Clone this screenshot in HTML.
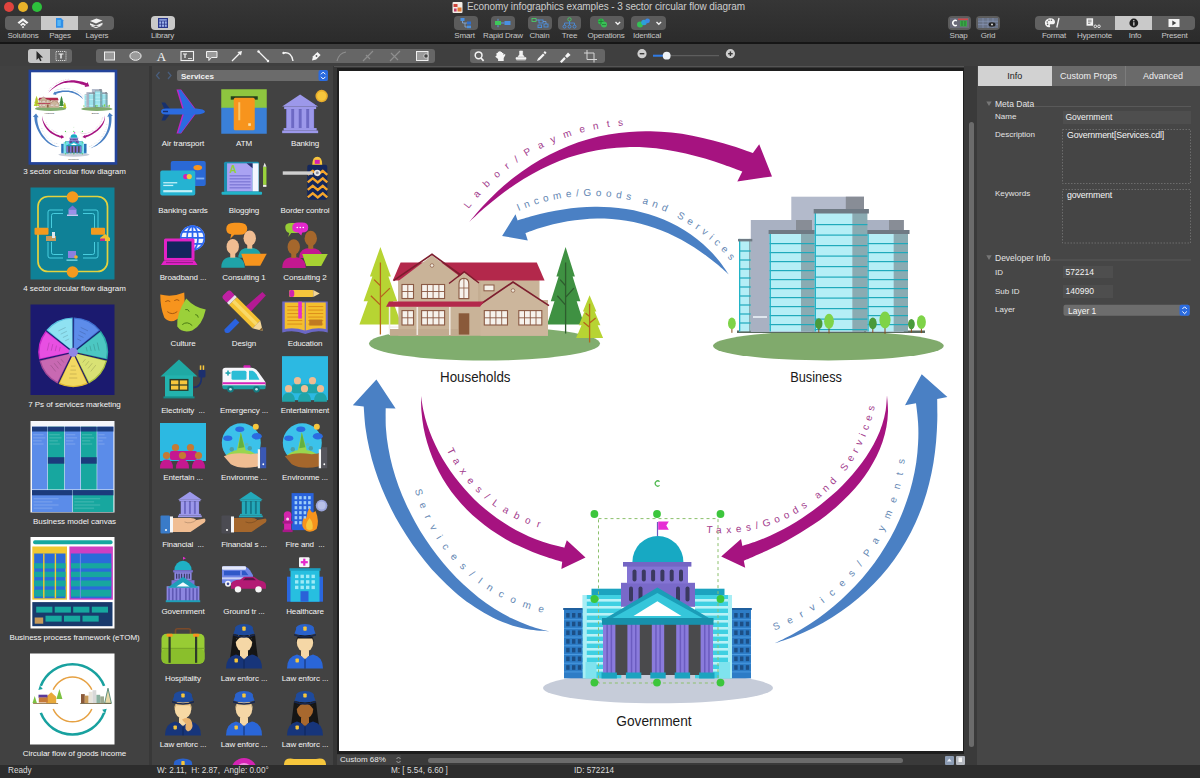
<!DOCTYPE html>
<html><head><meta charset="utf-8">
<style>
*{box-sizing:border-box;margin:0;padding:0}
html,body{width:1200px;height:778px;overflow:hidden;background:#3d3d3d;font-family:"Liberation Sans",sans-serif;}
.abs{position:absolute}
#tb1{position:absolute;left:0;top:0;width:1200px;height:43px;background:linear-gradient(#363636,#2b2b2b);}
#tb1line{position:absolute;left:0;top:42px;width:1200px;height:2px;background:#161616}
#tb2{position:absolute;left:0;top:44px;width:1200px;height:22px;background:#3f3f3f}
.tl{position:absolute;top:2px;width:10px;height:10px;border-radius:50%}
.seg{position:absolute;top:16px;height:14px;background:#616161;border-radius:4px;overflow:hidden}
.seg .sel{position:absolute;top:0;height:14px;background:#c9c9c9}
.btn{position:absolute;top:16px;height:14px;background:#5c5c5c;border-radius:4px}
.lbl{position:absolute;top:31px;font-size:8px;color:#c6c6c6;white-space:nowrap;transform:translateX(-50%);letter-spacing:-0.2px}
.seg2{position:absolute;top:49px;height:14px;background:#5e5e5e;border-radius:3px}
#pages{position:absolute;left:0;top:66px;width:149px;height:699px;background:#414141}
#pdiv{position:absolute;left:149px;top:66px;width:3px;height:699px;background:#383838}
#lib{position:absolute;left:152px;top:66px;width:181px;height:699px;background:#424242;overflow:hidden}
#canvasbg{position:absolute;left:333px;top:66px;width:644px;height:699px;background:#363636}
#page{position:absolute;left:339px;top:71px;width:624px;height:680px;background:#fff;overflow:hidden}
#right{position:absolute;left:977px;top:66px;width:223px;height:699px;background:#464646}
#status{position:absolute;left:0;top:765px;width:1200px;height:13px;background:#2d2d2d;color:#dcdcdc;font-size:8.2px}
#status span{position:absolute;top:1px;white-space:nowrap}
.plabel{position:absolute;left:0;width:149px;text-align:center;font-size:8px;color:#f4f4f4;white-space:nowrap;letter-spacing:-0.05px}
.thumb{position:absolute;left:30px;width:86px;height:93px;overflow:hidden}
.ilabel{position:absolute;font-size:8px;color:#f4f4f4;white-space:nowrap;transform:translateX(-50%);letter-spacing:-0.1px}
.tab{position:absolute;top:0;height:20px;font-size:9px;text-align:center;line-height:20px;color:#eee}
.rl{position:absolute;font-size:8px;color:#e4e4e4;white-space:nowrap}
.fld{position:absolute;background:#4e4e4e;color:#f2f2f2;font-size:8.5px;padding-left:3px;white-space:nowrap}
</style></head><body>
<!-- TOOLBAR1 -->
<div id="tb1">
<div class="tl" style="left:4px;background:#e0443e"></div>
<div class="tl" style="left:18px;background:#e9b32a"></div>
<div class="tl" style="left:32px;background:#2dc13c"></div>
<div class="seg" style="left:5px;width:109px"><div class="sel" style="left:36px;width:37px"></div>
<svg class="abs" style="left:0;top:0" width="109" height="14" viewBox="0 0 109 14">
<path d="M18 2.2 L23.5 6.6 L21.8 8 L18 5 L14.2 8 L12.5 6.6Z M18 6.4 L21 8.8 L19.6 10 L18 8.7 L16.4 10 L15 8.8Z M18 10 l1.3 1.1 l-1.3 1.1 l-1.3 -1.1Z" fill="#f4f4f4"/>
<path d="M51 2 h5 l2.2 2.2 v7.6 h-7.2Z" fill="#2f8fe8"/><path d="M52.3 4 h3.5 v6 h-3.5z" fill="#57b6f5"/>
<path d="M85 5 l6.5 -2.6 l6 2.2 l-6.5 2.8z M85 7.2 l6 2.4 l6.5 -2.8 v1.6 l-6.5 2.9 l-6 -2.5z M85 9.8 l6 2.5 l6.5 -2.9" fill="#f2f2f2"/>
</svg></div>
<div class="lbl" style="left:23px">Solutions</div><div class="lbl" style="left:60px">Pages</div><div class="lbl" style="left:97px">Layers</div>
<div class="btn" style="left:151px;width:24px;background:#c9c9c9"><svg class="abs" style="left:7px;top:2px" width="10" height="10" viewBox="0 0 10 10"><rect x="0.6" y="0.6" width="8.8" height="8.8" fill="#9bb0e8" stroke="#27358a" stroke-width="1.2"/><path d="M0.6 3 h8.8 M3.5 3 v6.4 M6.5 3 v6.4 M0.6 6.2 h8.8" stroke="#27358a" stroke-width="0.8"/></svg></div>
<div class="lbl" style="left:162.5px">Library</div>
<svg class="abs" style="left:452px;top:2px" width="11" height="11" viewBox="0 0 11 11"><rect x="0.5" y="0" width="10" height="11" rx="1" fill="#f3ede6"/><rect x="1.5" y="2" width="4" height="3" fill="#d0453a"/><rect x="5.5" y="5.5" width="4" height="4" fill="#e2772e"/><rect x="2" y="6.5" width="2.6" height="3" fill="#c23b6a"/></svg>
<div class="abs" style="left:467px;top:0px;font-size:10px;line-height:13px;color:#cdcdcd;white-space:nowrap;letter-spacing:-0.08px">Economy infographics examples - 3 sector circular flow diagram</div>
<div class="btn" style="left:454px;width:24px"><svg class="abs" style="left:5px;top:1px" width="14" height="12" viewBox="0 0 14 12"><rect x="1.5" y="1" width="4" height="3" fill="#4a90e2"/><rect x="8" y="4.5" width="4" height="3" fill="#2f6fd0"/><rect x="8" y="8.6" width="4" height="2.6" fill="#4a90e2"/><path d="M3.5 4 v2 h4.5 M6 6 v4 h2" stroke="#8ab8f0" stroke-width="0.7" fill="none"/></svg></div>
<div class="btn" style="left:491px;width:24px"><svg class="abs" style="left:3px;top:2px" width="18" height="10" viewBox="0 0 18 10"><rect x="1" y="3" width="6" height="4" fill="#3ec85a"/><rect x="10.5" y="3" width="6" height="4" fill="#4a90e2"/><path d="M7 5 h3.5 M4 0.8 v2 M4 7.2 v2" stroke="#5aa0f0" stroke-width="0.9"/></svg></div>
<div class="btn" style="left:528px;width:24px"><svg class="abs" style="left:3px;top:1px" width="18" height="12" viewBox="0 0 18 12"><rect x="1" y="1.5" width="4" height="3" fill="none" stroke="#4ac868" stroke-width="0.9"/><rect x="8" y="3" width="4" height="3" fill="none" stroke="#4a90e2" stroke-width="0.9"/><rect x="13" y="7" width="4" height="3" fill="none" stroke="#4a90e2" stroke-width="0.9"/><rect x="7" y="8" width="3.6" height="2.6" fill="none" stroke="#4a90e2" stroke-width="0.9"/><path d="M5 3 h3 M12 4.5 h3 v2.5" stroke="#6aa8f0" stroke-width="0.7" fill="none"/></svg></div>
<div class="btn" style="left:558px;width:23px"><svg class="abs" style="left:4px;top:1px" width="15" height="12" viewBox="0 0 15 12"><circle cx="7.5" cy="2.4" r="1.7" fill="none" stroke="#4ac868" stroke-width="0.9"/><path d="M7.5 4 v2 M2.5 8 v-2 h10 v2 M7.5 6 v2" stroke="#4a90e2" stroke-width="0.8" fill="none"/><circle cx="2.5" cy="9.6" r="1.5" fill="none" stroke="#4a90e2" stroke-width="0.9"/><circle cx="7.5" cy="9.6" r="1.5" fill="none" stroke="#4a90e2" stroke-width="0.9"/><circle cx="12.5" cy="9.6" r="1.5" fill="none" stroke="#4a90e2" stroke-width="0.9"/></svg></div>
<div class="btn" style="left:589.5px;width:34.5px"><svg class="abs" style="left:6px;top:1px" width="26" height="12" viewBox="0 0 26 12"><circle cx="5" cy="4.5" r="3" fill="#2fb84a"/><circle cx="8" cy="7.5" r="3" fill="#39c657" opacity="0.9"/><path d="M2.5 4.5 h5 M5 2 v5 M6 7.5 h4" stroke="#1a7a30" stroke-width="0.7"/><path d="M19.5 5 l2.3 2.3 l2.3 -2.3" stroke="#f0f0f0" stroke-width="1.4" fill="none"/></svg></div>
<div class="btn" style="left:631px;width:34.5px"><svg class="abs" style="left:4px;top:1px" width="28" height="12" viewBox="0 0 28 12"><circle cx="5" cy="7.5" r="3" fill="#35c055"/><circle cx="9" cy="5.5" r="2.8" fill="#2ea0d8"/><circle cx="12.5" cy="3.8" r="2.4" fill="#3a8ae8"/><path d="M21.5 5 l2.3 2.3 l2.3 -2.3" stroke="#f0f0f0" stroke-width="1.4" fill="none"/></svg></div>
<div class="lbl" style="left:464.5px">Smart</div><div class="lbl" style="left:503px">Rapid Draw</div><div class="lbl" style="left:539.5px">Chain</div><div class="lbl" style="left:569.5px">Tree</div><div class="lbl" style="left:606px">Operations</div><div class="lbl" style="left:647px">Identical</div>
<div class="btn" style="left:947.5px;width:23px"><svg class="abs" style="left:2px;top:2px" width="19" height="10" viewBox="0 0 19 10"><rect x="0" y="0" width="19" height="10" fill="#6a6a78"/><path d="M6.8 2.8 A2.6 2.6 0 1 0 6.8 7.2" stroke="#fff" stroke-width="1.5" fill="none"/><rect x="10" y="2.5" width="7" height="6" fill="#3aa848"/><rect x="8" y="0.5" width="10" height="1.6" fill="#d04848"/><path d="M12 3 v5 M15 3 v5" stroke="#1f6a2a" stroke-width="0.7"/></svg></div>
<div class="btn" style="left:976px;width:24px"><svg class="abs" style="left:2px;top:2px" width="20" height="10" viewBox="0 0 20 10"><rect width="20" height="10" fill="#6a7488"/><path d="M0 3.3 h20 M0 6.6 h20 M5 0 v10 M10 0 v10 M15 0 v10" stroke="#8a98b8" stroke-width="0.6"/><ellipse cx="14" cy="6.5" rx="3.5" ry="2.2" fill="#222"/><circle cx="14" cy="6.5" r="1" fill="#ddd"/></svg></div>
<div class="lbl" style="left:958.5px">Snap</div><div class="lbl" style="left:988px">Grid</div>
<div class="seg" style="left:1034.5px;width:160.5px"><div class="sel" style="left:80px;width:37.5px"></div>
<svg class="abs" style="left:0;top:0" width="161" height="14" viewBox="0 0 161 14">
<path d="M15.5 2.2 c-3.6 0 -5.6 2.4 -5.6 4.8 c0 2.4 1.8 4.3 4.2 4.3 c1.2 0 1.2 -1 .8 -1.6 c-.4 -.7 0 -1.4 .9 -1.4 h1.6 c1.6 0 2.6 -1 2.6 -2.4 c0 -2.2 -2 -3.7 -4.5 -3.7z" fill="#f4f4f4"/><circle cx="12.3" cy="6" r="0.8" fill="#616161"/><circle cx="14" cy="4.2" r="0.8" fill="#616161"/><circle cx="16.4" cy="4.3" r="0.8" fill="#616161"/><circle cx="12.6" cy="8.4" r="0.8" fill="#616161"/><path d="M24 2 l-2.2 9.5" stroke="#f4f4f4" stroke-width="1.3"/>
<rect x="51.5" y="2.3" width="6.6" height="7.4" fill="#f4f4f4"/><path d="M53 4.2 h3.6 M53 5.8 h3.6 M53 7.4 h2.4" stroke="#616161" stroke-width="0.7"/><circle cx="60.3" cy="10.3" r="1.3" fill="none" stroke="#f4f4f4" stroke-width="0.9"/><circle cx="64" cy="10.3" r="1.3" fill="none" stroke="#f4f4f4" stroke-width="0.9"/>
<circle cx="98.8" cy="7" r="4.4" fill="#1e1e1e"/><rect x="98.2" y="6.2" width="1.3" height="3.4" fill="#d0d0d0"/><circle cx="98.8" cy="4.7" r="0.8" fill="#d0d0d0"/>
<rect x="133.5" y="3" width="11" height="8" fill="#f4f4f4"/><path d="M137.3 4.6 v4.8 l4 -2.4z" fill="#444"/>
</svg></div>
<div class="lbl" style="left:1054px">Format</div><div class="lbl" style="left:1094.5px">Hypernote</div><div class="lbl" style="left:1135px">Info</div><div class="lbl" style="left:1174.5px">Present</div>

</div>
<div id="tb1line"></div>
<div id="tb2">
<div class="abs" style="left:28px;top:4.7px;width:44px;height:14px;background:#666666;border-radius:3px;overflow:hidden"><div class="abs" style="left:0;top:0;width:22px;height:14px;background:#c6c6c6"></div>
<svg class="abs" style="left:0;top:0" width="44" height="14" viewBox="0 0 44 14"><path d="M8.5 2 v9 l2.2 -2 l1.5 3.2 l1.4 -.7 l-1.5 -3 h3z" fill="#2a2a2a"/><rect x="28" y="2.5" width="10" height="9" fill="none" stroke="#eee" stroke-width="0.8" stroke-dasharray="1.2 0.8"/><path d="M30.6 4.4 h4.8 v1.2 h-1.7 v4 h-1.4 v-4 h-1.7z" fill="#f4f4f4"/></svg></div>
<div class="abs" style="left:96px;top:4.7px;width:338.5px;height:14px;background:#666666;border-radius:3px;overflow:hidden">
<svg class="abs" style="left:0;top:0" width="339" height="14" viewBox="96 49 339 14">
<rect x="104.5" y="52" width="10" height="8" fill="#9a9a9a" stroke="#f0f0f0" stroke-width="1"/>
<ellipse cx="135.5" cy="56" rx="5.6" ry="4.3" fill="#9a9a9a" stroke="#f0f0f0" stroke-width="1"/>
<text x="161.5" y="61" font-family="Liberation Serif, serif" font-size="13" fill="#f4f4f4" text-anchor="middle">A</text>
<rect x="181" y="51.5" width="12.5" height="9" fill="none" stroke="#f0f0f0" stroke-width="1.1"/><path d="M183 53.5 h4 v1 h-1.4 v3.5 h-1.2 v-3.5 h-1.4z" fill="#f4f4f4"/><path d="M188 58.5 h4" stroke="#f0f0f0" stroke-width="0.8"/>
<path d="M206.5 51.5 h10.5 v6 h-5.5 l-2.6 3 v-3 h-2.4z" fill="#9a9a9a" stroke="#f0f0f0" stroke-width="1"/>
<path d="M232 61 l8 -8" stroke="#f4f4f4" stroke-width="1.3"/><path d="M242 51 l-1 4.6 l-3.6 -3.6z" fill="#f4f4f4"/>
<path d="M258.5 51.5 l9.5 9.5" stroke="#f4f4f4" stroke-width="1.3"/><circle cx="258.5" cy="51.5" r="1.2" fill="#f4f4f4"/><circle cx="268" cy="61" r="1.2" fill="#f4f4f4"/>
<path d="M283.5 53 q8 -1.5 9.5 8" stroke="#f4f4f4" stroke-width="1.4" fill="none"/><circle cx="283.5" cy="53" r="1.2" fill="#f4f4f4"/>
<path d="M312 60.5 l1 -4.2 l4.4 -4.4 l3.2 3.2 l-4.4 4.4z" fill="#f4f4f4"/><circle cx="316.5" cy="56" r="0.9" fill="#5e5e5e"/>
<g fill="none" stroke="#8e8e8e" stroke-width="1.2"><path d="M337 61 q2 -8 9 -9"/><path d="M363 61 l10 -10 M366 55 l4 4"/><path d="M390 61 l10 -10 M391 53 l7 7"/></g>
<rect x="416.5" y="51.5" width="11.5" height="9" fill="#9a9a9a" stroke="#f0f0f0" stroke-width="1"/><circle cx="426" cy="56" r="2.2" fill="#444" stroke="#eee" stroke-width="0.7"/>
</svg></div>
<div class="abs" style="left:470px;top:4.7px;width:135px;height:14px;background:#666666;border-radius:3px;overflow:hidden">
<svg class="abs" style="left:0;top:0" width="135" height="14" viewBox="470 49 135 14">
<circle cx="478.6" cy="55.3" r="3.4" fill="none" stroke="#f4f4f4" stroke-width="1.5"/><path d="M481 58 l2.6 2.8" stroke="#f4f4f4" stroke-width="1.7"/>
<path d="M496.5 56 v-3 h1.3 v-1.2 h1.4 v-.6 h1.5 v.7 h1.4 v1 h1.3 v2 l1.2 -1 l.9 .8 l-1.8 3.2 v3 h-5.6 v-1.8 l-2.8 -2.4 l.8 -.9z" fill="#f4f4f4"/>
<path d="M519.6 51 h3 v3.5 l1.6 2.3 h-6.2 l1.6 -2.3z M516 57.6 h10 v1.6 h-10z M516.5 60 h9" fill="#f4f4f4" stroke="#f4f4f4" stroke-width="0.6"/>
<path d="M537 61 l1 -2.6 l5 -5 l1.7 1.7 l-5 5z M543.5 52.5 l1.4 -1.4 l1.7 1.7 l-1.4 1.4z" fill="#f4f4f4"/>
<path d="M560 61.5 l4.2 -4.4 l1.6 1.6 l-4.2 4.2z M565 56 l3 -3.6 l2.6 2.6 l-3.6 3z" fill="#f4f4f4"/>
<path d="M587 50 v9.500 h10 M584 53 h10 v9.500" stroke="#d4d4d4" stroke-width="1" fill="none"/>
</svg></div>
<svg class="abs" style="left:635px;top:3px" width="105" height="16" viewBox="635 47 105 16">
<circle cx="642" cy="53.700" r="4.6" fill="#cfcfcf"/><rect x="639.7" y="53" width="4.6" height="1.4" fill="#3a3a3a"/>
<path d="M653 55.700 h66" stroke="#5e5e5e" stroke-width="1.2"/><path d="M653 55.700 h13" stroke="#2f7be6" stroke-width="2"/>
<circle cx="666.700" cy="55.700" r="3.9" fill="#eef2f6"/>
<circle cx="730.400" cy="53.700" r="4.6" fill="#cfcfcf"/><rect x="728.1" y="53" width="4.6" height="1.4" fill="#3a3a3a"/><rect x="729.7" y="51.4" width="1.4" height="4.6" fill="#3a3a3a"/>
</svg>

</div>
<!-- PAGES -->
<div id="pages">
<svg class="abs" style="left:0;top:0" width="149" height="699" viewBox="0 66 149 699">
<rect x="29.800" y="71" width="86.200" height="92.400" fill="#fff" stroke="#23439a" stroke-width="2.6"/>
<svg x="31" y="72" width="84" height="91" viewBox="339 69 624 682" preserveAspectRatio="none"><use href="#diagroot"/></svg>
<rect x="30.500" y="187.500" width="84" height="92" fill="#0f8197"/>
<rect x="38" y="196.500" width="69.500" height="75" rx="10" fill="none" stroke="#e4d23e" stroke-width="1.700"/>
<rect x="48" y="210" width="50" height="48" rx="2" fill="none" stroke="#4fd6e6" stroke-width="0.9"/><rect x="51.500" y="213.500" width="43" height="41" rx="2" fill="none" stroke="#4fd6e6" stroke-width="0.9"/>
<rect x="63" y="206" width="20" height="12" fill="#0f8197"/><rect x="63" y="250" width="20" height="14" fill="#0f8197"/><rect x="44" y="228" width="12" height="14" fill="#0f8197"/><rect x="90" y="228" width="10" height="14" fill="#0f8197"/>
<circle cx="72.500" cy="197" r="5.800" fill="#f39a1e"/><circle cx="72.500" cy="272" r="5.800" fill="#f39a1e"/><rect x="34.500" y="227.700" width="14" height="7" rx="1" fill="#f39a1e"/><rect x="91" y="227.700" width="14" height="7" rx="1" fill="#f39a1e"/>
<path d="M72.500 205.500 l4.500 4 h-9z" fill="#7a72d2"/><rect x="68.500" y="209.500" width="8" height="5" fill="#9a90e8"/><rect x="67" y="214.500" width="11" height="1.500" fill="#c9c4f4"/>
<rect x="68" y="251" width="8" height="7" fill="#8a80e0"/><circle cx="76" cy="257" r="1.800" fill="#f0b030"/><rect x="66.500" y="259.500" width="11" height="1.300" fill="#7fdbe8"/>
<rect x="46" y="236" width="10" height="5" fill="#c79a5a"/><rect x="52" y="232" width="3" height="6" fill="#dfe6ee"/><path d="M100 238 l5 -4 l5 4 v3 h-10z" fill="#f0c030"/><rect x="100" y="238.500" width="5" height="2.500" fill="#c0308a"/>
<rect x="30.500" y="304.500" width="84" height="90.500" fill="#1b1a6f"/>
<path d="M73.2 352.3 L73.9 318.1 A34.2 34.2 0 0 1 99.5 330.4Z" fill="#5d8cea" stroke="#3f6fd0" stroke-width="1.4"/>
<path d="M77.2 338.9 L81.2 340.8" stroke="#00000030" stroke-width="0.8"/>
<path d="M78.4 335.1 L83.5 337.5" stroke="#00000030" stroke-width="0.8"/>
<path d="M79.5 331.2 L85.7 334.2" stroke="#00000030" stroke-width="0.8"/>
<path d="M80.7 327.4 L88.0 330.9" stroke="#00000030" stroke-width="0.8"/>
<path d="M73.2 352.3 L100.4 331.5 A34.2 34.2 0 0 1 106.7 359.2Z" fill="#4cc7c2" stroke="#2aa8a8" stroke-width="1.4"/>
<path d="M86.2 347.1 L87.2 351.4" stroke="#00000030" stroke-width="0.8"/>
<path d="M89.9 345.6 L91.2 351.1" stroke="#00000030" stroke-width="0.8"/>
<path d="M93.6 344.1 L95.2 350.8" stroke="#00000030" stroke-width="0.8"/>
<path d="M97.3 342.6 L99.1 350.6" stroke="#00000030" stroke-width="0.8"/>
<path d="M73.2 352.3 L106.4 360.6 A34.2 34.2 0 0 1 88.7 382.8Z" fill="#d9e274" stroke="#a8c040" stroke-width="1.4"/>
<path d="M85.4 359.2 L82.6 362.6" stroke="#00000030" stroke-width="0.8"/>
<path d="M88.9 361.2 L85.3 365.6" stroke="#00000030" stroke-width="0.8"/>
<path d="M92.3 363.2 L88.0 368.5" stroke="#00000030" stroke-width="0.8"/>
<path d="M95.8 365.1 L90.7 371.5" stroke="#00000030" stroke-width="0.8"/>
<path d="M73.2 352.3 L87.4 383.4 A34.2 34.2 0 0 1 59.0 383.4Z" fill="#f2d862" stroke="#e0b830" stroke-width="1.4"/>
<path d="M75.4 366.1 L71.0 366.1" stroke="#00000030" stroke-width="0.8"/>
<path d="M76.0 370.1 L70.4 370.1" stroke="#00000030" stroke-width="0.8"/>
<path d="M76.6 374.0 L69.8 374.0" stroke="#00000030" stroke-width="0.8"/>
<path d="M77.3 378.0 L69.1 378.0" stroke="#00000030" stroke-width="0.8"/>
<path d="M73.2 352.3 L57.7 382.8 A34.2 34.2 0 0 1 40.0 360.6Z" fill="#c869b2" stroke="#a04898" stroke-width="1.4"/>
<path d="M63.8 362.6 L61.0 359.2" stroke="#00000030" stroke-width="0.8"/>
<path d="M61.1 365.6 L57.5 361.2" stroke="#00000030" stroke-width="0.8"/>
<path d="M58.4 368.5 L54.1 363.2" stroke="#00000030" stroke-width="0.8"/>
<path d="M55.7 371.5 L50.6 365.1" stroke="#00000030" stroke-width="0.8"/>
<path d="M73.2 352.3 L39.7 359.2 A34.2 34.2 0 0 1 46.0 331.5Z" fill="#e84fe2" stroke="#c828c8" stroke-width="1.4"/>
<path d="M59.2 351.4 L60.2 347.1" stroke="#00000030" stroke-width="0.8"/>
<path d="M55.2 351.1 L56.5 345.6" stroke="#00000030" stroke-width="0.8"/>
<path d="M51.2 350.8 L52.8 344.1" stroke="#00000030" stroke-width="0.8"/>
<path d="M47.3 350.6 L49.1 342.6" stroke="#00000030" stroke-width="0.8"/>
<path d="M73.2 352.3 L46.9 330.4 A34.2 34.2 0 0 1 72.5 318.1Z" fill="#8fe2f2" stroke="#58c0e0" stroke-width="1.4"/>
<path d="M65.2 340.8 L69.2 338.9" stroke="#00000030" stroke-width="0.8"/>
<path d="M62.9 337.5 L68.0 335.1" stroke="#00000030" stroke-width="0.8"/>
<path d="M60.7 334.2 L66.9 331.2" stroke="#00000030" stroke-width="0.8"/>
<path d="M58.4 330.9 L65.7 327.4" stroke="#00000030" stroke-width="0.8"/>
<path d="M73.2 352.3 L73.2 317.1" stroke="#1b1a6f" stroke-width="1.1"/>
<path d="M73.2 352.3 L100.7 330.4" stroke="#1b1a6f" stroke-width="1.1"/>
<path d="M73.2 352.3 L107.5 360.1" stroke="#1b1a6f" stroke-width="1.1"/>
<path d="M73.2 352.3 L88.5 384.0" stroke="#1b1a6f" stroke-width="1.1"/>
<path d="M73.2 352.3 L57.9 384.0" stroke="#1b1a6f" stroke-width="1.1"/>
<path d="M73.2 352.3 L38.9 360.1" stroke="#1b1a6f" stroke-width="1.1"/>
<path d="M73.2 352.3 L45.7 330.4" stroke="#1b1a6f" stroke-width="1.1"/>
<circle cx="73.2" cy="352.3" r="4.6" fill="#8f86e6"/>
<rect x="30.500" y="421" width="84" height="91.500" fill="#f4f6fb"/>
<rect x="32.0" y="426.7" width="15.4" height="62.8" fill="#5b8ce9"/>
<rect x="32.0" y="426.7" width="15.4" height="4.8" fill="#1b3b7c"/>
<rect x="47.9" y="426.7" width="16.4" height="62.8" fill="#17a79f"/>
<rect x="47.9" y="426.7" width="16.4" height="4.8" fill="#1b3b7c"/>
<rect x="64.8" y="426.7" width="15.7" height="62.8" fill="#5b8ce9"/>
<rect x="64.8" y="426.7" width="15.7" height="4.8" fill="#1b3b7c"/>
<rect x="81.0" y="426.7" width="15.7" height="62.8" fill="#17a79f"/>
<rect x="81.0" y="426.7" width="15.7" height="4.8" fill="#1b3b7c"/>
<rect x="97.2" y="426.7" width="16.2" height="62.8" fill="#5b8ce9"/>
<rect x="97.2" y="426.7" width="16.2" height="4.8" fill="#1b3b7c"/>
<rect x="47.9" y="457.2" width="16.4" height="6.5" fill="#1b3b7c"/>
<rect x="81.0" y="457.2" width="15.7" height="6.5" fill="#1b3b7c"/>
<rect x="32.0" y="490.1" width="40.3" height="21.9" fill="#5b8ce9"/>
<rect x="72.8" y="490.1" width="40.6" height="21.9" fill="#17a79f"/>
<rect x="32.0" y="490.1" width="40.3" height="5.2" fill="#1b3b7c"/>
<rect x="72.8" y="490.1" width="40.6" height="5.2" fill="#1b3b7c"/>
<rect x="33.1" y="434.4" width="10.5" height="0.8" fill="#ffffff40"/>
<rect x="33.1" y="437.5" width="12.3" height="0.8" fill="#ffffff40"/>
<rect x="33.1" y="440.5" width="8.6" height="0.8" fill="#ffffff40"/>
<rect x="33.1" y="443.6" width="10.5" height="0.8" fill="#ffffff40"/>
<rect x="49.3" y="434.4" width="10.5" height="0.8" fill="#ffffff40"/>
<rect x="49.3" y="437.5" width="12.3" height="0.8" fill="#ffffff40"/>
<rect x="49.3" y="440.5" width="8.6" height="0.8" fill="#ffffff40"/>
<rect x="49.3" y="443.6" width="10.5" height="0.8" fill="#ffffff40"/>
<rect x="66.0" y="434.4" width="9.3" height="0.8" fill="#ffffff40"/>
<rect x="66.0" y="437.5" width="11.1" height="0.8" fill="#ffffff40"/>
<rect x="66.0" y="440.5" width="7.4" height="0.8" fill="#ffffff40"/>
<rect x="66.0" y="443.6" width="9.3" height="0.8" fill="#ffffff40"/>
<rect x="82.0" y="434.4" width="10.2" height="0.8" fill="#ffffff40"/>
<rect x="82.0" y="437.5" width="12.0" height="0.8" fill="#ffffff40"/>
<rect x="82.0" y="440.5" width="8.3" height="0.8" fill="#ffffff40"/>
<rect x="82.0" y="443.6" width="10.2" height="0.8" fill="#ffffff40"/>
<rect x="98.4" y="434.4" width="6.2" height="0.8" fill="#ffffff40"/>
<rect x="98.4" y="437.5" width="8.0" height="0.8" fill="#ffffff40"/>
<rect x="98.4" y="440.5" width="4.3" height="0.8" fill="#ffffff40"/>
<rect x="98.4" y="443.6" width="6.2" height="0.8" fill="#ffffff40"/>
<rect x="33.6" y="498.4" width="25.0" height="0.8" fill="#ffffff40"/>
<rect x="74.3" y="498.4" width="25.9" height="0.8" fill="#ffffff40"/>
<rect x="33.6" y="501.5" width="18.8" height="0.8" fill="#ffffff40"/>
<rect x="74.3" y="501.5" width="19.8" height="0.8" fill="#ffffff40"/>
<rect x="33.6" y="504.6" width="25.0" height="0.8" fill="#ffffff40"/>
<rect x="74.3" y="504.6" width="25.9" height="0.8" fill="#ffffff40"/>
<rect x="33.6" y="507.7" width="18.8" height="0.8" fill="#ffffff40"/>
<rect x="74.3" y="507.7" width="19.8" height="0.8" fill="#ffffff40"/>
<rect x="30.500" y="537" width="84" height="91.500" fill="#ffffff"/>
<rect x="33.1" y="540.3" width="79.5" height="4.0" rx="1.800" fill="#17a79f"/>
<rect x="32.3" y="546.5" width="34.7" height="53.2" fill="#f1c831"/>
<rect x="69.4" y="546.5" width="43.5" height="53.2" fill="#cf3fc2"/>
<rect x="34.2" y="553.5" width="31.3" height="44.8" fill="#2a6bd9"/>
<rect x="70.9" y="553.5" width="40.4" height="44.8" fill="#2a6bd9"/>
<rect x="34.2" y="563.2" width="31.3" height="5.2" fill="#17a79f"/>
<rect x="70.9" y="563.2" width="40.4" height="5.2" fill="#17a79f"/>
<rect x="34.2" y="571.7" width="31.3" height="5.4" fill="#17a79f"/>
<rect x="70.9" y="571.7" width="40.4" height="5.4" fill="#17a79f"/>
<rect x="34.2" y="580.5" width="31.3" height="5.9" fill="#17a79f"/>
<rect x="70.9" y="580.5" width="40.4" height="5.9" fill="#17a79f"/>
<rect x="34.2" y="589.7" width="31.3" height="6.9" fill="#17a79f"/>
<rect x="70.9" y="589.7" width="40.4" height="6.9" fill="#17a79f"/>
<rect x="43.1" y="553.5" width="1.4" height="44.8" fill="#f1c831"/>
<rect x="54.7" y="553.5" width="1.4" height="44.8" fill="#f1c831"/>
<rect x="79.9" y="553.5" width="0.9" height="44.8" fill="#6f8fe8"/>
<rect x="32.3" y="602.1" width="80.2" height="24.1" fill="#193a6c"/>
<rect x="36.2" y="606.7" width="16.2" height="5.9" fill="#17a79f"/>
<rect x="54.7" y="606.7" width="16.2" height="5.9" fill="#17a79f"/>
<rect x="73.2" y="606.7" width="16.2" height="5.9" fill="#17a79f"/>
<rect x="91.8" y="606.7" width="16.2" height="5.9" fill="#17a79f"/>
<rect x="45.5" y="615.7" width="16.2" height="5.9" fill="#17a79f"/>
<rect x="64.0" y="615.7" width="16.2" height="5.9" fill="#17a79f"/>
<rect x="82.5" y="615.7" width="16.2" height="5.9" fill="#17a79f"/>
<rect x="34.7" y="617.5" width="8.5" height="6.2" fill="#c79a5a"/>
<rect x="30" y="653.500" width="84.500" height="91" fill="#ffffff"/>
<path d="M40.8 685.9 A34 34 0 0 1 104.1 685.9" fill="none" stroke="#18a19f" stroke-width="2.600"/>
<path d="M40.8 712.9 A34 34 0 0 0 104.1 712.9" fill="none" stroke="#18a19f" stroke-width="2.600"/>
<path d="M39.8 685.4 l-1.500 4.500 l4.500 -1z M105.2 713.7 l1.500 -5 l-4.500 1z" fill="#18a19f"/>
<path d="M53.2 689.8 A21 21 0 0 1 91.8 689.8" fill="none" stroke="#e6a142" stroke-width="1.500"/>
<path d="M53.2 709.0 A21 21 0 0 0 91.8 709.0" fill="none" stroke="#e6a142" stroke-width="1.500"/>
<path d="M46.2 696.7 l5 -4.500 l5 4.500 v6.500 h-10z" fill="#e8a93a"/>
<rect x="38.5" y="694.7" width="9" height="3" fill="#5a3a9a"/><rect x="38.8" y="697.5" width="9" height="5" fill="#c47a3a"/>
<path d="M59.4 689.0 l3 10 h-6z M34.7 695.9 l2.200 7 h-4.400z" fill="#7cc242"/>
<rect x="33.1" y="703.2" width="25" height="0.800" fill="#8a6a3a"/>
<rect x="81.0" y="694.1" width="3.800" height="9.3" fill="#8a5a3a"/>
<rect x="84.8" y="695.6" width="3.800" height="7.7" fill="#c79a5a"/>
<rect x="88.7" y="691.8" width="3.800" height="11.6" fill="#e8e4dc"/>
<rect x="92.5" y="690.2" width="3.800" height="13.1" fill="#d8d8d8"/>
<rect x="96.4" y="694.8" width="3.800" height="8.5" fill="#8ab0a0"/>
<rect x="100.2" y="696.4" width="3.800" height="6.9" fill="#9aa890"/>
<path d="M104.6 703.3 L108.0 688.2 L111.4 703.3Z" fill="#e8d8a8" stroke="#3a7a6a" stroke-width="0.800"/>
<rect x="80.2" y="703.2" width="31" height="0.800" fill="#6a5a3a"/>
</svg>
<div class="plabel" style="top:101.3px">3 sector circular flow diagram</div>
<div class="plabel" style="top:217.6px">4 sector circular flow diagram</div>
<div class="plabel" style="top:334.2px">7 Ps of services marketing</div>
<div class="plabel" style="top:450.6px">Business model canvas</div>
<div class="plabel" style="top:566.9px">Business process framework (eTOM)</div>
<div class="plabel" style="top:683.4px">Circular flow of goods income</div>
</div>
<div id="pdiv"></div>
<!-- LIBRARY -->
<div id="lib">
<svg class="abs" style="left:0;top:0" width="181" height="699" viewBox="152 66 181 699">
<path d="M159.500 72 l-3 3.500 l3 3.500 M168 72 l3 3.500 l-3 3.500" stroke="#4a5f7e" stroke-width="1.200" fill="none"/>
<rect x="177" y="70" width="151" height="11" rx="2" fill="#6b6b6b"/><rect x="318.500" y="70" width="9.500" height="11" rx="2" fill="#2a6be0"/><path d="M321 74.300 l2.200 -2.200 l2.200 2.200 M321 76.800 l2.200 2.200 l2.200 -2.200" stroke="#fff" stroke-width="1" fill="none"/>
<g transform="translate(160.00 88.50)"><path d="M16.5 1 h4.6 L36 21 H22.5Z M16.5 45 h4.6 L36 25 H22.5Z" fill="#c024c4"/><path d="M18.2 1.5 h2.6 L35 21 H24Z M18.2 44.5 h2.6 L35 25 H24Z" fill="#2b6be0"/><path d="M1.5 14 h3.5 l5.500 7 h-6z M1.5 32 h3.5 l5.500 -7 h-6z" fill="#17306e"/><path d="M1 23 Q1 20 6 20 H36 Q44.5 20.500 45 23 Q44.5 25.500 36 26 H6 Q1 26 1 23Z" fill="#2b6be0"/><rect x="3" y="22.3" width="5" height="1.4" fill="#17306e"/></g>
<g transform="translate(221.25 88.25)"><rect x="0" y="1" width="45.5" height="19" fill="#8ec63f"/><rect x="0" y="19.5" width="45.5" height="26" fill="#3a80d8"/><rect x="9.5" y="8" width="27" height="3.4" fill="#24401c"/><rect x="12.5" y="9.5" width="21" height="32.5" fill="#f7941d" rx="1.5"/><rect x="17" y="14" width="2" height="18" fill="#fbc56a"/><rect x="27" y="35" width="2.6" height="2.6" fill="#fde2a8"/></g>
<g transform="translate(282.15 88.05)"><g transform="translate(0 1.5) scale(1)"><path d="M0 17 L18 5 L36 17Z" fill="#9c98ea"/><rect x="2" y="17" width="32" height="2.5" fill="#9c98ea"/><rect x="4" y="19.5" width="28" height="19.5" fill="#6d69c4"/><rect x="4.5" y="19.5" width="4.6" height="19.5" fill="#9c98ea"/><rect x="12" y="19.5" width="4.6" height="19.5" fill="#9c98ea"/><rect x="19.5" y="19.5" width="4.6" height="19.5" fill="#9c98ea"/><rect x="27" y="19.5" width="4.6" height="19.5" fill="#9c98ea"/><rect x="1.5" y="38.5" width="33" height="2.5" fill="#9c98ea"/><rect x="0" y="41" width="36" height="2.6" fill="#9c98ea"/></g><path d="M33 17 L37 12" stroke="#3a3a6a" stroke-width="0.8"/><circle cx="39.5" cy="8" r="6.2" fill="#e6ac2c"/><circle cx="39.5" cy="8" r="4.6" fill="#f6c63c"/></g>
<g transform="translate(160.25 158.60)"><rect x="10.5" y="2.5" width="35" height="25" fill="#2a69d6" rx="2"/><ellipse cx="37.5" cy="9" rx="4.3" ry="2.6" fill="#f7941d"/><rect x="36" y="19" width="8" height="1.8" fill="#7fb0f4"/><rect x="0" y="12" width="35" height="25" fill="#25b3d2" rx="2"/><circle cx="25.5" cy="18" r="2.6" fill="#d420b4"/><circle cx="29" cy="18" r="2.6" fill="#f6c63c"/><rect x="3" y="23.5" width="14" height="1.3" fill="#c3f0f8"/><rect x="3" y="26.2" width="10" height="1.3" fill="#c3f0f8"/><rect x="3" y="31.5" width="29" height="2.2" fill="#c3f0f8"/></g>
<g transform="translate(221.55 159.85)"><rect x="2.5" y="2" width="35" height="30.5" fill="#1d8fb0" rx="1.5"/><rect x="5.5" y="3.5" width="25.5" height="28" fill="#a9a2f2"/><rect x="31" y="3.5" width="6" height="28" fill="#f4f6ff"/><path d="M31 3.500 h-6 l6 5z" fill="#24306a"/><path d="M8 16 h21" stroke="#6c64c8" stroke-width="0.9"/><path d="M8 19 h21" stroke="#6c64c8" stroke-width="0.9"/><path d="M8 22 h21" stroke="#6c64c8" stroke-width="0.9"/><path d="M8 25 h21" stroke="#6c64c8" stroke-width="0.9"/><path d="M8 28 h21" stroke="#6c64c8" stroke-width="0.9"/><text x="8" y="13.5" font-size="10" font-weight="bold" fill="#8ed03a" font-family="Liberation Sans, sans-serif">A</text><rect x="0" y="32" width="40.5" height="3" fill="#22b4c8" rx="1"/><rect x="41.5" y="7" width="3.4" height="18" fill="#9ad23c"/><path d="M41.5 7 l1.700 -4 l1.700 4z" fill="#e8e8e8"/><rect x="41.5" y="25" width="3.4" height="2" fill="#f0f0f0"/></g>
<g transform="translate(281.75 154.85)"><rect x="25.5" y="10" width="20" height="35" fill="#14275c" rx="2"/><g clip-path="inset(0)"><path d="M26 20 l5 -4 l5 4 l5 -4 l4.500 4" stroke="#f4a52c" stroke-width="2.4" fill="none"/><path d="M26 27.5 l5 -4 l5 4 l5 -4 l4.500 4" stroke="#f4a52c" stroke-width="2.4" fill="none"/><path d="M26 35 l5 -4 l5 4 l5 -4 l4.500 4" stroke="#f4a52c" stroke-width="2.4" fill="none"/><path d="M26 42.5 l5 -4 l5 4 l5 -4 l4.500 4" stroke="#f4a52c" stroke-width="2.4" fill="none"/></g><rect x="1" y="16.5" width="30" height="3.4" fill="#cfcfcf"/><circle cx="35.5" cy="18" r="3.2" fill="#e8e8e8"/><circle cx="35.5" cy="18" r="1.5" fill="#8a8a9a"/><path d="M30.500 10 Q30.500 2 35.500 2 Q40.500 2 40.500 10Z" fill="#f6c63c"/><rect x="33" y="5" width="5" height="4" fill="#d420b4"/></g>
<g transform="translate(161.00 224.45)"><circle cx="31.5" cy="13.5" r="12.5" fill="#f4f8ff"/><g fill="none" stroke="#2a66ee" stroke-width="1.7"><circle cx="31.5" cy="13.5" r="11.8"/><ellipse cx="31.5" cy="13.5" rx="5.5" ry="11.8"/><path d="M19.700 13.500 h23.600 M31.500 1.700 v23.600 M21.500 7.500 h20 M21.500 19.500 h20"/></g><rect x="3" y="14" width="30.5" height="22" fill="#e222c6" rx="1.5"/><rect x="6" y="17" width="24.5" height="16.5" fill="#14255e"/><path d="M3 36 h30.500 l3 4.500 h-36.500z" fill="#e222c6"/><rect x="5" y="37.5" width="27" height="1.2" fill="#a01890"/></g>
<g transform="translate(221.25 221.70)"><path d="M5 7 Q5 1 13 1 H18 Q26 1 26 7 Q26 13 18 13 H13 L9 17 L10 12.500 Q5 12 5 7Z" fill="#f7941d"/><path d="M17 36 Q17 26 28 26 Q40 26 40 36Z" fill="#1fa3a8"/><ellipse cx="28.5" cy="16.5" rx="6.2" ry="7.6" fill="#f0bd92"/><rect x="26" y="22" width="5" height="5" fill="#f0bd92"/><path d="M20 32 H45.500 L39 44 H24Z" fill="#f7941d"/><path d="M0 46 Q0 35 11.500 35 Q23.500 35 23.500 46Z" fill="#1fa3a8"/><ellipse cx="11.5" cy="25" rx="6.2" ry="7.6" fill="#f0bd92"/><rect x="9" y="31" width="5" height="5" fill="#f0bd92"/></g>
<g transform="translate(282.25 221.95)"><path d="M3 5 Q3 1 9 1 H15 Q20 1 20 6 Q20 11 14 11 L9 11 L6 15 L7 11 Q3 10 3 5Z" fill="#96cc35"/><path d="M10 5.500 Q10 0.500 16 0.500 H20 Q26 0.500 26 5.500 Q26 10.500 20 10.500 L19 13.500 L16 10.500 Q10 10.500 10 5.500Z" fill="#e428cc"/><circle cx="15" cy="5.5" r="0.8" fill="#fff"/><circle cx="18" cy="5.5" r="0.8" fill="#fff"/><circle cx="21" cy="5.5" r="0.8" fill="#fff"/><path d="M17 36 Q17 26 28 26 Q40 26 40 36Z" fill="#c41890"/><ellipse cx="28.5" cy="16.5" rx="6.2" ry="7.6" fill="#a5672c"/><rect x="26" y="22" width="5" height="5" fill="#a5672c"/><path d="M20 32 H45.500 L39 44 H24Z" fill="#a7d232"/><path d="M0 46 Q0 35 11.500 35 Q23.500 35 23.500 46Z" fill="#c41890"/><ellipse cx="11.5" cy="25" rx="6.2" ry="7.6" fill="#a5672c"/><rect x="9" y="31" width="5" height="5" fill="#a5672c"/></g>
<g transform="translate(160.25 287.60)"><path d="M0 7 Q12 10 24 5 Q26 22 18 31 Q10 37 4 30 Q0 20 0 7Z" fill="#f7941d"/><path d="M5 14 q3 -2 5 0 M14 13 q3 -2 5 0 M7 24 q5 4 10 0" fill="none" stroke="#a85a10" stroke-width="1"/><path d="M26 11 Q34 20 45.500 22 Q42 38 32 43 Q22 46 17 39 Q16 26 26 11Z" fill="#9bd03a"/><path d="M25 22 q3 -1 4 2 M35 27 q3 0 3 3 M22 37 q5 -4 10 1" fill="none" stroke="#4a7a14" stroke-width="1"/></g>
<g transform="translate(221.35 289.40)"><path d="M41 2.500 L44.500 6 L27 25 L21 20Z" fill="#b41a94"/><path d="M14 29 L18 33 L8 43 Q3 45 3 40Z" fill="#2a62de"/><g transform="rotate(45 23 23)"><rect x="-4" y="17.5" width="9" height="11" fill="#c020a4" rx="3"/><rect x="4" y="17.5" width="3" height="11" fill="#e8e0e8"/><rect x="7" y="17.5" width="33" height="11" fill="#f4c233"/><rect x="7" y="21" width="33" height="3.5" fill="#f9d968"/><path d="M40 17.5 L49 23 L40 28.500Z" fill="#f3d79a"/><path d="M46 21.200 L49 23 L46 24.800Z" fill="#7a5a2a"/></g></g>
<g transform="translate(282.25 289.55)"><rect x="7" y="0.5" width="24" height="7" fill="#f6c63c" rx="1"/><rect x="7" y="0.5" width="5" height="7" fill="#d024b0" rx="2"/><path d="M31 0.500 L37.500 4 L31 7.500Z" fill="#f3d79a"/><path d="M0 12 H45.500 V43 Q34 40 23 44.500 Q12 40 0 43Z" fill="#6a67c6"/><path d="M2.500 13 H22.500 V41 Q12 37.500 2.500 39.500Z" fill="#f4bf2e"/><path d="M23.500 13 H43.500 V39.500 Q34 37.500 23.500 41Z" fill="#f4bf2e"/><path d="M5 17 h15 M26 17 h15" stroke="#d9881a" stroke-width="0.9"/><path d="M5 20.5 h15 M26 20.5 h15" stroke="#d9881a" stroke-width="0.9"/><path d="M5 24 h15 M26 24 h15" stroke="#d9881a" stroke-width="0.9"/><path d="M5 27.5 h15 M26 27.5 h15" stroke="#d9881a" stroke-width="0.9"/><path d="M5 31 h15 M26 31 h15" stroke="#d9881a" stroke-width="0.9"/><path d="M5 34.5 h15 M26 34.5 h15" stroke="#d9881a" stroke-width="0.9"/><rect x="16" y="12" width="3.6" height="17" fill="#e42ccc"/><rect x="27" y="30" width="13" height="6" fill="#c07a22"/></g>
<g transform="translate(160.50 357.40)"><path d="M0 19 L18.500 2 L37 19Z" fill="#1fa9a4"/><rect x="4.5" y="18" width="28" height="22" fill="#23b3ae"/><rect x="3" y="39" width="31" height="2" fill="#168a88"/><rect x="9" y="21.5" width="19" height="12" fill="#2a3a2a"/><rect x="10.5" y="23" width="7.4" height="4" fill="#f6c63c"/><rect x="19.3" y="23" width="7.4" height="4" fill="#f6c63c"/><rect x="10.5" y="28.2" width="7.4" height="4" fill="#f6c63c"/><rect x="19.3" y="28.2" width="7.4" height="4" fill="#f6c63c"/><path d="M33 30 Q41 30 41 19" fill="none" stroke="#1c2f6e" stroke-width="1.6"/><rect x="38" y="12" width="7" height="8" fill="#1c2f6e" rx="1.5"/><rect x="39.3" y="8" width="1.5" height="4.5" fill="#f6c63c"/><rect x="42.2" y="8" width="1.5" height="4.5" fill="#f6c63c"/></g>
<g transform="translate(220.50 357.25)"><rect x="23" y="8" width="7" height="3" fill="#d422b8" rx="1"/><path d="M2 13 Q2 10.500 5 10.500 H31 Q35 10.500 38 15 L43 22 Q45 24 45 27 V29 H2Z" fill="#f6f6fa"/><rect x="11" y="13.5" width="15" height="9" fill="#2bbdd6" rx="1.5"/><path d="M28.500 13.500 H32 Q34 14 36 17 L39 22.500 H28.500Z" fill="#2bbdd6"/><rect x="2" y="25" width="43" height="2" fill="#d422b8"/><path d="M2 28 H45 V31 Q45 32 43 32 H4 Q2 32 2 30Z" fill="#1c9ea2"/><circle cx="10" cy="32" r="3.3" fill="#147a80"/><circle cx="36" cy="32" r="3.3" fill="#147a80"/><circle cx="10" cy="32" r="1.3" fill="#bfe8ea"/><circle cx="36" cy="32" r="1.3" fill="#bfe8ea"/><rect x="5" y="15" width="5" height="1.6" fill="#1fa5b0"/><rect x="6.7" y="13.3" width="1.6" height="5" fill="#1fa5b0"/></g>
<g transform="translate(282.00 356.15)"><rect x="0" y="0" width="46" height="44" fill="#2cb9e2"/><rect x="10" y="28" width="27" height="9" fill="#1fa3a8" rx="2"/><circle cx="15.5" cy="24.5" r="3.6" fill="#f0bd92"/><circle cx="30.5" cy="24.5" r="3.6" fill="#f0bd92"/><path d="M0 45.500 Q0 36.500 6.5 36.500 Q13 36.500 13 45.500Z" fill="#1fa3a8"/><circle cx="6.5" cy="32.5" r="3.6" fill="#f0bd92"/><path d="M16 45.500 Q16 36.500 22.5 36.500 Q29 36.500 29 45.500Z" fill="#1fa3a8"/><circle cx="22.5" cy="32.5" r="3.6" fill="#f0bd92"/><path d="M32 45.500 Q32 36.500 38.5 36.500 Q45 36.500 45 45.500Z" fill="#1fa3a8"/><circle cx="38.5" cy="32.5" r="3.6" fill="#f0bd92"/></g>
<g transform="translate(160.00 423.00)"><rect x="0" y="0" width="46" height="38" fill="#2cb9e2"/><rect x="10" y="28" width="27" height="9" fill="#c41890" rx="2"/><circle cx="15.5" cy="24.5" r="3.6" fill="#c47a34"/><circle cx="30.5" cy="24.5" r="3.6" fill="#c47a34"/><path d="M0 45.500 Q0 36.500 6.5 36.500 Q13 36.500 13 45.500Z" fill="#c41890"/><circle cx="6.5" cy="32.5" r="3.6" fill="#c47a34"/><path d="M16 45.500 Q16 36.500 22.5 36.500 Q29 36.500 29 45.500Z" fill="#c41890"/><circle cx="22.5" cy="32.5" r="3.6" fill="#c47a34"/><path d="M32 45.500 Q32 36.500 38.5 36.500 Q45 36.500 45 45.500Z" fill="#c41890"/><circle cx="38.5" cy="32.5" r="3.6" fill="#c47a34"/></g>
<g transform="translate(220.80 423.25)"><circle cx="20.5" cy="19.5" r="19.5" fill="#3cc2ea"/><path d="M5 32 Q12 27 16 27 L20 9 L25 27 Q30 27 36 32Z" fill="#9ad54e"/><path d="M20 9 L23.500 24 L17.500 25Z" fill="#62b040"/><circle cx="11" cy="26" r="2.2" fill="#4aa0a8"/><circle cx="29" cy="25" r="2.2" fill="#4aa0a8"/><circle cx="26" cy="21" r="1.6" fill="#5ab8c0"/><ellipse cx="19" cy="6" rx="4.5" ry="2.8" fill="#2b6be0"/><ellipse cx="7" cy="15" rx="4.5" ry="2.8" fill="#2b6be0"/><ellipse cx="36" cy="13" rx="5" ry="3.2" fill="#2b6be0"/><circle cx="35" cy="3.5" r="3" fill="#f6c63c"/><path d="M3 33 Q14 28 30 31 L38 30 V43 Q20 47 10 41Z" fill="#f0bd92"/><rect x="37" y="26" width="2.4" height="19" fill="#f4f4f4"/><rect x="39.4" y="24" width="6" height="21" fill="#3a58b4"/><circle cx="42.5" cy="41" r="0.9" fill="#fff"/></g>
<g transform="translate(281.80 423.25)"><circle cx="20.5" cy="19.5" r="19.5" fill="#3cc2ea"/><path d="M5 32 Q12 27 16 27 L20 9 L25 27 Q30 27 36 32Z" fill="#9ad54e"/><path d="M20 9 L23.500 24 L17.500 25Z" fill="#62b040"/><circle cx="11" cy="26" r="2.2" fill="#4aa0a8"/><circle cx="29" cy="25" r="2.2" fill="#4aa0a8"/><circle cx="26" cy="21" r="1.6" fill="#5ab8c0"/><ellipse cx="19" cy="6" rx="4.5" ry="2.8" fill="#2b6be0"/><ellipse cx="7" cy="15" rx="4.5" ry="2.8" fill="#2b6be0"/><ellipse cx="36" cy="13" rx="5" ry="3.2" fill="#2b6be0"/><circle cx="35" cy="3.5" r="3" fill="#f6c63c"/><path d="M3 33 Q14 28 30 31 L38 30 V43 Q20 47 10 41Z" fill="#a5672c"/><rect x="37" y="26" width="2.4" height="19" fill="#f4f4f4"/><rect x="39.4" y="24" width="6" height="21" fill="#55555c"/><circle cx="42.5" cy="41" r="0.9" fill="#fff"/></g>
<g transform="translate(160.50 490.95)"><g transform="translate(17.5 -2.5) scale(0.66)"><path d="M0 17 L18 5 L36 17Z" fill="#9c98ea"/><rect x="2" y="17" width="32" height="2.5" fill="#9c98ea"/><rect x="4" y="19.5" width="28" height="19.5" fill="#6d69c4"/><rect x="4.5" y="19.5" width="4.6" height="19.5" fill="#9c98ea"/><rect x="12" y="19.5" width="4.6" height="19.5" fill="#9c98ea"/><rect x="19.5" y="19.5" width="4.6" height="19.5" fill="#9c98ea"/><rect x="27" y="19.5" width="4.6" height="19.5" fill="#9c98ea"/><rect x="1.5" y="38.5" width="33" height="2.5" fill="#9c98ea"/><rect x="0" y="41" width="36" height="2.6" fill="#9c98ea"/></g><path d="M12 27 H30 Q34 27 36 29 L44 27.500 Q46 29 44 31.500 L30 41 H12Z" fill="#f0bd92"/><path d="M24 31 Q30 33.500 36 29" fill="none" stroke="#00000030" stroke-width="1"/><rect x="0" y="24.5" width="9.5" height="18" fill="#3a7bc8" rx="1"/><rect x="9.5" y="25.5" width="3" height="16" fill="#f6f6f6"/><circle cx="5.5" cy="39" r="1" fill="#fff"/></g>
<g transform="translate(221.50 490.95)"><g transform="translate(17.5 -2.5) scale(0.66)"><path d="M0 17 L18 5 L36 17Z" fill="#23a9ba"/><rect x="2" y="17" width="32" height="2.5" fill="#23a9ba"/><rect x="4" y="19.5" width="28" height="19.5" fill="#157a8c"/><rect x="4.5" y="19.5" width="4.6" height="19.5" fill="#23a9ba"/><rect x="12" y="19.5" width="4.6" height="19.5" fill="#23a9ba"/><rect x="19.5" y="19.5" width="4.6" height="19.5" fill="#23a9ba"/><rect x="27" y="19.5" width="4.6" height="19.5" fill="#23a9ba"/><rect x="1.5" y="38.5" width="33" height="2.5" fill="#23a9ba"/><rect x="0" y="41" width="36" height="2.6" fill="#23a9ba"/></g><path d="M12 27 H30 Q34 27 36 29 L44 27.500 Q46 29 44 31.500 L30 41 H12Z" fill="#a5672c"/><path d="M24 31 Q30 33.500 36 29" fill="none" stroke="#00000030" stroke-width="1"/><rect x="0" y="24.5" width="9.5" height="18" fill="#4b4b52" rx="1"/><rect x="9.5" y="25.5" width="3" height="16" fill="#f6f6f6"/><circle cx="5.5" cy="39" r="1" fill="#fff"/></g>
<g transform="translate(281.60 491.10)"><rect x="10" y="2" width="22" height="37" fill="#2862dc"/><rect x="13" y="5" width="2.6" height="3.2" fill="#9ccdf8"/><rect x="13" y="10" width="2.6" height="3.2" fill="#9ccdf8"/><rect x="13" y="15" width="2.6" height="3.2" fill="#9ccdf8"/><rect x="13" y="20" width="2.6" height="3.2" fill="#9ccdf8"/><rect x="13" y="25" width="2.6" height="3.2" fill="#9ccdf8"/><rect x="13" y="30" width="2.6" height="3.2" fill="#9ccdf8"/><rect x="17.5" y="5" width="2.6" height="3.2" fill="#9ccdf8"/><rect x="17.5" y="10" width="2.6" height="3.2" fill="#9ccdf8"/><rect x="17.5" y="15" width="2.6" height="3.2" fill="#9ccdf8"/><rect x="17.5" y="20" width="2.6" height="3.2" fill="#9ccdf8"/><rect x="17.5" y="25" width="2.6" height="3.2" fill="#9ccdf8"/><rect x="17.5" y="30" width="2.6" height="3.2" fill="#9ccdf8"/><rect x="22" y="5" width="2.6" height="3.2" fill="#9ccdf8"/><rect x="22" y="10" width="2.6" height="3.2" fill="#9ccdf8"/><rect x="22" y="15" width="2.6" height="3.2" fill="#9ccdf8"/><rect x="22" y="20" width="2.6" height="3.2" fill="#9ccdf8"/><rect x="22" y="25" width="2.6" height="3.2" fill="#9ccdf8"/><rect x="22" y="30" width="2.6" height="3.2" fill="#9ccdf8"/><rect x="26.5" y="5" width="2.6" height="3.2" fill="#9ccdf8"/><rect x="26.5" y="10" width="2.6" height="3.2" fill="#9ccdf8"/><rect x="26.5" y="15" width="2.6" height="3.2" fill="#9ccdf8"/><rect x="26.5" y="20" width="2.6" height="3.2" fill="#9ccdf8"/><rect x="26.5" y="25" width="2.6" height="3.2" fill="#9ccdf8"/><rect x="26.5" y="30" width="2.6" height="3.2" fill="#9ccdf8"/><circle cx="40" cy="14.5" r="5.8" fill="#9aa4da"/><circle cx="40" cy="14.5" r="4" fill="#b8c0e6"/><rect x="2.5" y="25" width="7" height="15" fill="#d424ac" rx="1.5"/><circle cx="6" cy="24" r="3.8" fill="#d424ac"/><rect x="1" y="30" width="10" height="2.5" fill="#a81888"/><rect x="1" y="38.5" width="10" height="2.5" fill="#a81888"/><circle cx="6" cy="28" r="1.5" fill="#f6d0ee"/><path d="M28 17 Q30 24 34 20 Q38 30 35 38 Q30 42 25 40 Q18 36 22 27 Q24 29 25 26 Q25 21 28 17Z" fill="#f7941d"/><path d="M28 27 Q32 32 31 38 Q28 40 25 38 Q23 33 28 27Z" fill="#f6c63c"/></g>
<g transform="translate(160.04 556.20)"><g transform="translate(4.100 0) scale(0.820 1)"><path d="M23 0.500 l3.500 1.500 l-3.500 1.500z" fill="#e42ccc"/><path d="M12.500 14 A10.500 9.500 0 0 1 33.500 14Z" fill="#1fb0c4"/><rect x="11" y="14" width="24" height="2.2" fill="#7a72d2"/><rect x="12.5" y="16" width="21" height="8" fill="#8c86e0"/><rect x="14.5" y="17.5" width="1.5" height="5" fill="#3c3a66"/><rect x="17.5" y="17.5" width="1.5" height="5" fill="#3c3a66"/><rect x="20.5" y="17.5" width="1.5" height="5" fill="#3c3a66"/><rect x="24" y="17.5" width="1.5" height="5" fill="#3c3a66"/><rect x="27" y="17.5" width="1.5" height="5" fill="#3c3a66"/><rect x="30" y="17.5" width="1.5" height="5" fill="#3c3a66"/><rect x="9" y="24" width="28" height="6" fill="#7a72d2"/><rect x="3" y="30" width="40" height="15.5" fill="#8c86e0"/><rect x="5" y="32" width="2" height="13" fill="#5f59b4"/><rect x="9.5" y="32" width="2" height="13" fill="#5f59b4"/><rect x="14" y="32" width="2" height="13" fill="#5f59b4"/><rect x="18.5" y="32" width="2" height="13" fill="#5f59b4"/><rect x="25.5" y="32" width="2" height="13" fill="#5f59b4"/><rect x="30" y="32" width="2" height="13" fill="#5f59b4"/><rect x="34.5" y="32" width="2" height="13" fill="#5f59b4"/><rect x="39" y="32" width="2" height="13" fill="#5f59b4"/><path d="M23 20.500 L42 31.500 H4Z" fill="#1f9fb8"/><path d="M23 26 L31 30.200 H15Z" fill="#f4fbff"/><rect x="2" y="44" width="42" height="2" fill="#1f9fb8"/></g></g>
<g transform="translate(220.00 557.35)"><path d="M2 11 Q2 9 4 9 H23 Q27 9 30 13 L33 18 V26 H2Z" fill="#6f86e6"/><rect x="2" y="9" width="24" height="3.5" fill="#e4e8fa" rx="1"/><rect x="4" y="13.5" width="16" height="4.5" fill="#2f58c8"/><path d="M22 13.500 h3 l3.500 4.500 h-6.500z" fill="#2f58c8"/><rect x="2" y="20" width="31" height="2" fill="#c8d0f4"/><circle cx="8" cy="26.5" r="3" fill="#f4f4f8"/><circle cx="8" cy="26.5" r="1.3" fill="#3a4a9a"/><path d="M11 27 Q12 22.500 20 22.500 L24 19.500 H34 L39 23 Q46 24 46 28 V31.500 H11Z" fill="#b31a74"/><path d="M23 23 l2.500 -2.500 h7.500 l3 2.500z" fill="#5c1448"/><circle cx="18" cy="32" r="3.2" fill="#f6f6f6"/><circle cx="38.5" cy="32" r="3.2" fill="#f6f6f6"/></g>
<g transform="translate(285.50 556.70)"><rect x="1.5" y="20" width="36" height="25" fill="#2a66de"/><rect x="5" y="13" width="29" height="32" fill="#27bfe0"/><rect x="4" y="11.5" width="31" height="2.6" fill="#1c9ec0"/><rect x="9.5" y="18" width="3.4" height="3.4" fill="#9eeaf6"/><rect x="9.5" y="23.5" width="3.4" height="3.4" fill="#9eeaf6"/><rect x="9.5" y="29" width="3.4" height="3.4" fill="#9eeaf6"/><rect x="15" y="18" width="3.4" height="3.4" fill="#9eeaf6"/><rect x="15" y="23.5" width="3.4" height="3.4" fill="#9eeaf6"/><rect x="15" y="29" width="3.4" height="3.4" fill="#9eeaf6"/><rect x="20.5" y="18" width="3.4" height="3.4" fill="#9eeaf6"/><rect x="20.5" y="23.5" width="3.4" height="3.4" fill="#9eeaf6"/><rect x="20.5" y="29" width="3.4" height="3.4" fill="#9eeaf6"/><rect x="26" y="18" width="3.4" height="3.4" fill="#9eeaf6"/><rect x="26" y="23.5" width="3.4" height="3.4" fill="#9eeaf6"/><rect x="26" y="29" width="3.4" height="3.4" fill="#9eeaf6"/><rect x="15" y="34.5" width="8" height="10.5" fill="#2a62d8"/><rect x="13.5" y="0.5" width="10.5" height="10" fill="#f6f6f8" rx="1"/><rect x="17.7" y="2" width="2.2" height="7" fill="#e428cc"/><rect x="15.3" y="4.4" width="7" height="2.2" fill="#e428cc"/></g>
<g transform="translate(161.50 623.80)"><path d="M14 11 V7 Q14 5 16 5 H27 Q29 5 29 7 V11" fill="none" stroke="#7a4a2a" stroke-width="1.600"/><rect x="0" y="10" width="43" height="30" fill="#98cc34" rx="5"/><rect x="0" y="25" width="43" height="15" fill="#8abf2c" rx="5"/><rect x="0" y="24" width="43" height="1.2" fill="#7aa828"/><rect x="7" y="11" width="2.2" height="28" fill="#2e3a2a"/><rect x="33.5" y="11" width="2.2" height="28" fill="#2e3a2a"/><rect x="5" y="10" width="6.2" height="3" fill="#f7941d" rx="1"/><rect x="31.5" y="10" width="6.2" height="3" fill="#f7941d" rx="1"/></g>
<g transform="translate(221.00 622.55)"><path d="M12 12 Q10 30 9 36 L37 36 Q36 30 34 12Z" fill="#151515"/><path d="M5 46 Q5 34 15 32 L23 35 L31 32 Q41 34 41 46Z" fill="#17357a"/><path d="M19 28 h8 v5 l-4 4 l-4 -4z" fill="#f5d7a6"/><ellipse cx="23" cy="20" rx="8.2" ry="9.5" fill="#f5d7a6"/><path d="M14.5 20 Q15 11 23 12 Q31 11 31.5 20 Q28 14 23 14 Q18 14 14.5 20Z" fill="#151515"/><path d="M12.5 11 Q23 15 33.5 11 L32 7 Q33 2 23 1.5 Q13 2 14 7Z" fill="#1e4a9c"/><path d="M12 11.5 Q23 16 34 11.5 L34 13 Q23 17.5 12 13Z" fill="#16264f"/><rect x="21.3" y="4" width="3.4" height="4.2" fill="#f6c63c" rx="0.8"/><rect x="13.5" y="36" width="3.4" height="4" fill="#f6c63c" rx="0.8"/><path d="M23 36 V46" fill="#0d2250" stroke="#0d2250" stroke-width="0.8"/></g>
<g transform="translate(282.00 622.55)"><path d="M5 46 Q5 34 15 32 L23 35 L31 32 Q41 34 41 46Z" fill="#2a66d8"/><path d="M19 28 h8 v5 l-4 4 l-4 -4z" fill="#f5d7a6"/><ellipse cx="23" cy="20" rx="8.2" ry="9.5" fill="#f5d7a6"/><path d="M14.300 21 Q13.500 11 23 11 Q32.500 11 31.700 21 L30.500 16 L15.500 16Z" fill="#151515"/><path d="M12.5 11 Q23 15 33.5 11 L32 7 Q33 2 23 1.5 Q13 2 14 7Z" fill="#2a62cc"/><path d="M12 11.5 Q23 16 34 11.5 L34 13 Q23 17.5 12 13Z" fill="#16264f"/><rect x="21.3" y="4" width="3.4" height="4.2" fill="#f6c63c" rx="0.8"/><rect x="13.5" y="36" width="3.4" height="4" fill="#f6c63c" rx="0.8"/><path d="M23 36 V46" fill="#0d2250" stroke="#0d2250" stroke-width="0.8"/></g>
<g transform="translate(160.00 689.40)"><path d="M5 46 Q5 34 15 32 L23 35 L31 32 Q41 34 41 46Z" fill="#17357a"/><path d="M19 28 h8 v5 l-4 4 l-4 -4z" fill="#f7d9a4"/><ellipse cx="23" cy="20" rx="8.2" ry="9.5" fill="#f7d9a4"/><path d="M14.300 21 Q13.500 11 23 11 Q32.500 11 31.700 21 L30.500 16 L15.500 16Z" fill="#e8c07a"/><path d="M12.5 11 Q23 15 33.5 11 L32 7 Q33 2 23 1.5 Q13 2 14 7Z" fill="#1e4a9c"/><path d="M12 11.5 Q23 16 34 11.5 L34 13 Q23 17.5 12 13Z" fill="#16264f"/><rect x="21.3" y="4" width="3.4" height="4.2" fill="#f6c63c" rx="0.8"/><rect x="13.5" y="36" width="3.4" height="4" fill="#f6c63c" rx="0.8"/><path d="M23 36 V46" fill="#0d2250" stroke="#0d2250" stroke-width="0.8"/><path d="M22 30 Q30 26 32 33 Q34 40 28 42 Q24 40 26 34 Q24 33 22 30Z" fill="#e9b36f"/></g>
<g transform="translate(221.00 689.40)"><path d="M5 46 Q5 34 15 32 L23 35 L31 32 Q41 34 41 46Z" fill="#2a66d8"/><path d="M19 28 h8 v5 l-4 4 l-4 -4z" fill="#f5d7a6"/><ellipse cx="23" cy="20" rx="8.2" ry="9.5" fill="#f5d7a6"/><path d="M14.300 21 Q13.500 11 23 11 Q32.500 11 31.700 21 L30.500 16 L15.500 16Z" fill="#e8c890"/><path d="M12.5 11 Q23 15 33.5 11 L32 7 Q33 2 23 1.5 Q13 2 14 7Z" fill="#2a62cc"/><path d="M12 11.5 Q23 16 34 11.5 L34 13 Q23 17.5 12 13Z" fill="#16264f"/><rect x="21.3" y="4" width="3.4" height="4.2" fill="#f6c63c" rx="0.8"/><rect x="13.5" y="36" width="3.4" height="4" fill="#f6c63c" rx="0.8"/><path d="M23 36 V46" fill="#0d2250" stroke="#0d2250" stroke-width="0.8"/></g>
<g transform="translate(282.00 689.40)"><path d="M12 12 Q10 30 9 36 L37 36 Q36 30 34 12Z" fill="#151515"/><path d="M5 46 Q5 34 15 32 L23 35 L31 32 Q41 34 41 46Z" fill="#17357a"/><path d="M19 28 h8 v5 l-4 4 l-4 -4z" fill="#a8682e"/><ellipse cx="23" cy="20" rx="8.2" ry="9.5" fill="#a8682e"/><path d="M14.5 20 Q15 11 23 12 Q31 11 31.5 20 Q28 14 23 14 Q18 14 14.5 20Z" fill="#151515"/><path d="M12.5 11 Q23 15 33.5 11 L32 7 Q33 2 23 1.5 Q13 2 14 7Z" fill="#1e4a9c"/><path d="M12 11.5 Q23 16 34 11.5 L34 13 Q23 17.5 12 13Z" fill="#16264f"/><rect x="21.3" y="4" width="3.4" height="4.2" fill="#f6c63c" rx="0.8"/><rect x="13.5" y="36" width="3.4" height="4" fill="#f6c63c" rx="0.8"/><path d="M23 36 V46" fill="#0d2250" stroke="#0d2250" stroke-width="0.8"/></g>
<g transform="translate(160.00 757.00)"><path d="M5 46 Q5 34 15 32 L23 35 L31 32 Q41 34 41 46Z" fill="#2a66d8"/><path d="M19 28 h8 v5 l-4 4 l-4 -4z" fill="#f5d7a6"/><ellipse cx="23" cy="20" rx="8.2" ry="9.5" fill="#f5d7a6"/><path d="M14.300 21 Q13.500 11 23 11 Q32.500 11 31.700 21 L30.500 16 L15.500 16Z" fill="#151515"/><path d="M12.5 11 Q23 15 33.5 11 L32 7 Q33 2 23 1.5 Q13 2 14 7Z" fill="#2a62cc"/><path d="M12 11.5 Q23 16 34 11.5 L34 13 Q23 17.5 12 13Z" fill="#16264f"/><rect x="21.3" y="4" width="3.4" height="4.2" fill="#f6c63c" rx="0.8"/><rect x="13.5" y="36" width="3.4" height="4" fill="#f6c63c" rx="0.8"/><path d="M23 36 V46" fill="#0d2250" stroke="#0d2250" stroke-width="0.8"/></g>
<g transform="translate(221.00 757.00)"><circle cx="23" cy="14" r="13" fill="#d424b4"/><circle cx="23" cy="14" r="8" fill="#f090e0"/></g>
<g transform="translate(282.00 757.00)"><path d="M2 8 Q2 0 12 2 H34 Q44 0 44 8 Q44 16 34 16 H12 Q2 16 2 8Z" fill="#f6c63c"/></g>
</svg>
<div class="abs" style="left:29px;top:4.500px;font-size:8px;line-height:11px;color:#f2f2f2;font-weight:bold;letter-spacing:0px">Services</div>
<div class="ilabel" style="left:31px;top:72.8px">Air transport</div>
<div class="ilabel" style="left:92px;top:72.8px">ATM</div>
<div class="ilabel" style="left:153px;top:72.8px">Banking</div>
<div class="ilabel" style="left:31px;top:139.65px">Banking cards</div>
<div class="ilabel" style="left:92px;top:139.65px">Blogging</div>
<div class="ilabel" style="left:153px;top:139.65px">Border control</div>
<div class="ilabel" style="left:31px;top:206.5px">Broadband ...</div>
<div class="ilabel" style="left:92px;top:206.5px">Consulting 1</div>
<div class="ilabel" style="left:153px;top:206.5px">Consulting 2</div>
<div class="ilabel" style="left:31px;top:273.35px">Culture</div>
<div class="ilabel" style="left:92px;top:273.35px">Design</div>
<div class="ilabel" style="left:153px;top:273.35px">Education</div>
<div class="ilabel" style="left:31px;top:340.2px">Electricity&nbsp; ...</div>
<div class="ilabel" style="left:92px;top:340.2px">Emergency ...</div>
<div class="ilabel" style="left:153px;top:340.2px">Entertainment</div>
<div class="ilabel" style="left:31px;top:407.05px">Entertain ...</div>
<div class="ilabel" style="left:92px;top:407.05px">Environme ...</div>
<div class="ilabel" style="left:153px;top:407.05px">Environme ...</div>
<div class="ilabel" style="left:31px;top:473.9px">Financial&nbsp; ...</div>
<div class="ilabel" style="left:92px;top:473.9px">Financial s ...</div>
<div class="ilabel" style="left:153px;top:473.9px">Fire and&nbsp; ...</div>
<div class="ilabel" style="left:31px;top:540.75px">Government</div>
<div class="ilabel" style="left:92px;top:540.75px">Ground tr ...</div>
<div class="ilabel" style="left:153px;top:540.75px">Healthcare</div>
<div class="ilabel" style="left:31px;top:607.6px">Hospitality</div>
<div class="ilabel" style="left:92px;top:607.6px">Law enforc ...</div>
<div class="ilabel" style="left:153px;top:607.6px">Law enforc ...</div>
<div class="ilabel" style="left:31px;top:674.45px">Law enforc ...</div>
<div class="ilabel" style="left:92px;top:674.45px">Law enforc ...</div>
<div class="ilabel" style="left:153px;top:674.45px">Law enforc ...</div>
</div>
<!-- CANVAS -->
<div id="canvasbg">
<!-- canvasbg is at left 333 top 66 -->
<div class="abs" style="left:1px;top:0;width:643px;height:1px;background:#545454"></div>
<div class="abs" style="left:4px;top:2px;width:628px;height:686px;background:#1e1e1e"></div>
<div class="abs" style="left:631px;top:0;width:13px;height:688px;background:#3a3a3a"></div>
<div class="abs" style="left:636px;top:56px;width:5px;height:625px;background:#6b6b6b;border-radius:2.500px"></div>
<div class="abs" style="left:4px;top:688px;width:640px;height:11px;background:#3a3a3a"></div>
<div class="abs" style="left:4px;top:689px;width:64px;height:10px;background:#424242;color:#e8e8e8;font-size:8px;line-height:10px;padding-left:3px;white-space:nowrap">Custom 68%</div>
<svg class="abs" style="left:62px;top:689px" width="8" height="10" viewBox="0 0 8 10"><path d="M1.500 4 l2 -2 l2 2 M1.500 6 l2 2 l2 -2" stroke="#aaa" stroke-width="0.9" fill="none"/></svg>
<div class="abs" style="left:95px;top:691.5px;width:475px;height:5px;background:#6b6b6b;border-radius:2.500px"></div>
<div class="abs" style="left:611.500px;top:689.500px;width:9.500px;height:9px;background:#8c9cb4;border-radius:1px"></div>
<div class="abs" style="left:623px;top:689.500px;width:9px;height:9px;background:#b4b8c0;border-radius:1px"></div>
<svg class="abs" style="left:611px;top:689px" width="22" height="10" viewBox="0 0 22 10"><path d="M3 6.500 l2.300 -3 l2.300 3z" fill="#e8eef8"/><rect x="14.500" y="2.500" width="3.500" height="4.500" fill="#f4f4f4"/></svg>

</div>
<div id="page">
<svg style="position:absolute;left:0;top:-2px" width="624" height="682" viewBox="339 69 624 682" font-family="Liberation Sans, sans-serif"><g id="diagroot">
<path d="M469.2 222.0C471.5 219.4 478.0 211.4 482.7 206.3C487.5 201.2 492.4 196.1 497.6 191.3C502.8 186.6 508.2 181.9 513.8 177.6C519.4 173.2 525.2 169.1 531.1 165.3C537.0 161.5 543.1 157.9 549.4 154.7C555.6 151.4 562.0 148.5 568.5 145.9C575.0 143.3 581.6 141.1 588.3 139.2C595.0 137.3 601.8 135.7 608.7 134.5C615.5 133.3 622.5 132.4 629.4 131.9C636.4 131.3 643.4 131.2 650.4 131.3C657.4 131.4 664.4 131.9 671.4 132.6C678.4 133.4 685.5 134.4 692.4 135.7C699.3 137.0 706.3 138.6 713.1 140.4C719.9 142.1 726.7 144.1 733.3 146.3C739.9 148.4 749.6 152.0 752.9 153.1L759.2 144.3L772.0 176.4L737.3 181.4L742.3 171.5C739.2 170.4 730.2 166.9 723.9 164.7C717.7 162.6 711.4 160.5 705.0 158.6C698.6 156.7 692.2 155.0 685.7 153.5C679.2 152.0 672.6 150.7 666.0 149.7C659.4 148.7 652.8 148.0 646.2 147.6C639.7 147.1 633.0 147.0 626.5 147.2C619.9 147.4 613.4 147.9 606.9 148.7C600.4 149.5 593.9 150.7 587.5 152.2C581.1 153.7 574.8 155.5 568.5 157.6C562.3 159.7 556.1 162.2 550.1 164.9C544.0 167.6 538.1 170.6 532.3 173.9C526.4 177.2 520.7 180.7 515.1 184.4C509.6 188.1 504.1 192.1 498.9 196.2C493.6 200.3 488.5 204.5 483.5 208.8C478.6 213.2 471.6 219.8 469.2 222.0Z" fill="#a61380"/>
<path d="M728.8 274.5C727.0 272.9 721.5 268.0 717.8 264.8C714.0 261.7 710.1 258.6 706.2 255.7C702.2 252.8 698.2 250.0 694.0 247.3C689.9 244.7 685.7 242.2 681.4 239.8C677.1 237.5 672.7 235.3 668.3 233.3C663.8 231.4 659.3 229.6 654.7 228.0C650.1 226.4 645.4 225.0 640.7 223.8C636.0 222.6 631.2 221.6 626.4 220.8C621.6 220.0 616.7 219.5 611.8 219.1C606.9 218.7 602.0 218.6 597.1 218.6C592.2 218.7 587.2 219.0 582.3 219.4C577.4 219.9 572.5 220.5 567.6 221.3C562.8 222.2 557.9 223.2 553.1 224.3C548.4 225.5 543.6 226.9 539.0 228.3C534.4 229.8 527.7 232.3 525.4 233.1L527.8 240.5L502.1 235.9L515.5 214.3L517.6 220.4C520.1 219.7 527.4 217.3 532.4 216.0C537.4 214.6 542.5 213.4 547.6 212.3C552.8 211.2 558.0 210.2 563.2 209.4C568.4 208.6 573.6 208.0 578.9 207.5C584.1 207.1 589.4 206.8 594.7 206.8C600.0 206.7 605.2 206.9 610.5 207.3C615.7 207.6 620.9 208.2 626.1 209.1C631.3 209.9 636.4 210.9 641.4 212.2C646.5 213.5 651.5 215.0 656.4 216.8C661.3 218.6 666.1 220.6 670.8 222.8C675.4 225.1 680.0 227.6 684.4 230.3C688.8 233.1 693.1 236.1 697.2 239.3C701.3 242.5 705.3 246.0 709.0 249.7C712.7 253.4 716.3 257.3 719.6 261.4C722.9 265.6 727.3 272.3 728.8 274.5Z" fill="#4a80c4"/>
<path d="M549.4 631.5C545.8 631.1 534.8 630.6 527.8 629.3C520.8 628.0 514.0 626.1 507.5 623.7C500.9 621.4 494.6 618.5 488.5 615.2C482.4 612.0 476.4 608.3 470.7 604.3C465.0 600.4 459.5 596.0 454.2 591.4C448.9 586.8 443.8 581.9 438.9 576.8C434.0 571.8 429.3 566.4 424.9 560.9C420.4 555.5 416.1 549.8 412.1 544.0C408.1 538.2 404.2 532.2 400.6 526.1C397.0 520.1 393.7 513.9 390.5 507.6C387.4 501.3 384.5 495.0 381.9 488.5C379.2 482.0 376.9 475.5 374.8 468.9C372.6 462.2 370.8 455.5 369.3 448.7C367.7 441.9 366.5 435.0 365.5 427.9C364.6 420.9 364.0 410.1 363.7 406.5L352.8 405.3L376.4 379.6L395.6 408.4L385.7 408.2C385.7 411.5 385.5 421.6 385.9 428.1C386.3 434.7 387.2 441.3 388.3 447.8C389.4 454.2 390.8 460.7 392.5 467.0C394.2 473.4 396.3 479.7 398.5 485.9C400.8 492.1 403.3 498.2 406.1 504.2C408.9 510.2 411.9 516.1 415.1 521.9C418.3 527.7 421.8 533.4 425.4 539.0C429.1 544.5 432.9 549.9 437.0 555.2C441.0 560.4 445.3 565.5 449.7 570.4C454.1 575.3 458.7 580.1 463.5 584.5C468.3 589.0 473.3 593.3 478.5 597.4C483.6 601.4 488.9 605.2 494.5 608.7C500.0 612.2 505.7 615.4 511.6 618.3C517.5 621.2 523.6 623.8 529.9 626.0C536.2 628.2 546.1 630.6 549.4 631.5Z" fill="#4a80c4"/>
<path d="M421.0 396.1C421.1 398.7 421.1 406.6 421.5 411.8C421.9 417.0 422.6 422.2 423.5 427.4C424.5 432.5 425.7 437.7 427.2 442.7C428.7 447.7 430.4 452.7 432.3 457.5C434.3 462.4 436.5 467.1 438.9 471.7C441.4 476.4 444.1 480.9 446.9 485.2C449.8 489.6 452.9 493.8 456.2 497.8C459.5 501.9 463.0 505.8 466.7 509.5C470.4 513.2 474.3 516.7 478.3 520.1C482.3 523.5 486.5 526.7 490.8 529.7C495.1 532.7 499.6 535.5 504.1 538.2C508.7 540.8 513.3 543.3 518.1 545.6C522.8 547.9 527.7 550.0 532.6 552.0C537.4 553.9 542.4 555.7 547.3 557.3C552.3 559.0 559.7 561.1 562.2 561.8L561.4 568.9L585.5 557.6L566.8 540.2L564.3 547.7C561.9 547.1 554.5 545.5 549.8 544.1C545.0 542.7 540.3 541.1 535.7 539.3C531.2 537.5 526.7 535.5 522.3 533.3C517.9 531.2 513.5 528.8 509.3 526.3C505.1 523.8 501.0 521.1 497.0 518.3C493.0 515.4 489.1 512.4 485.4 509.3C481.6 506.1 477.9 502.8 474.4 499.4C470.9 495.9 467.4 492.3 464.2 488.6C460.9 484.9 457.8 481.0 454.8 477.1C451.8 473.1 449.0 469.0 446.3 464.8C443.6 460.7 441.1 456.4 438.8 452.0C436.5 447.6 434.4 443.2 432.4 438.6C430.5 434.1 428.8 429.5 427.2 424.8C425.7 420.1 424.4 415.4 423.4 410.6C422.4 405.8 421.4 398.5 421.0 396.1Z" fill="#a61380"/>
<path d="M887.0 395.2C887.2 397.9 888.1 406.1 888.0 411.4C887.9 416.7 887.3 421.9 886.4 427.0C885.5 432.1 884.1 437.1 882.5 442.0C880.9 446.9 878.8 451.6 876.6 456.3C874.3 460.9 871.7 465.4 869.0 469.8C866.2 474.1 863.1 478.4 859.9 482.5C856.6 486.5 853.2 490.5 849.5 494.3C845.9 498.1 842.1 501.7 838.2 505.2C834.3 508.8 830.2 512.1 826.1 515.4C821.9 518.6 817.6 521.7 813.3 524.6C808.9 527.6 804.5 530.4 800.0 533.1C795.5 535.8 790.9 538.4 786.3 540.9C781.7 543.4 777.0 545.8 772.3 548.0C767.6 550.3 762.9 552.5 758.1 554.6C753.4 556.8 746.2 559.8 743.8 560.8L745.2 567.8L721.2 556.5L741.0 538.9L742.4 545.9C744.8 545.1 751.9 543.0 756.5 541.3C761.2 539.6 765.7 537.7 770.1 535.7C774.6 533.7 779.0 531.5 783.3 529.2C787.6 526.9 791.8 524.5 796.0 521.9C800.2 519.4 804.3 516.7 808.3 513.8C812.3 511.0 816.3 508.1 820.2 505.0C824.1 502.0 827.9 498.8 831.6 495.5C835.3 492.3 838.9 488.9 842.4 485.4C845.9 481.8 849.3 478.2 852.5 474.5C855.7 470.8 858.8 466.9 861.7 463.0C864.7 459.0 867.4 455.0 869.9 450.8C872.5 446.6 874.8 442.4 876.8 438.0C878.9 433.6 880.7 429.1 882.2 424.4C883.7 419.8 884.9 415.1 885.7 410.2C886.5 405.3 886.8 397.7 887.0 395.2Z" fill="#a61380"/>
<path d="M774.8 643.3C778.1 642.2 788.0 639.1 794.5 636.5C801.0 633.9 807.4 631.0 813.8 627.8C820.1 624.6 826.3 621.1 832.3 617.3C838.4 613.5 844.3 609.4 849.9 605.1C855.6 600.7 861.0 596.1 866.2 591.3C871.4 586.4 876.4 581.3 881.1 576.1C885.7 570.8 890.2 565.2 894.3 559.5C898.4 553.8 902.2 547.9 905.7 541.8C909.3 535.7 912.5 529.5 915.4 523.1C918.3 516.7 920.9 510.1 923.2 503.5C925.5 496.9 927.5 490.1 929.2 483.2C930.9 476.4 932.3 469.4 933.5 462.5C934.6 455.5 935.5 448.4 936.1 441.4C936.7 434.3 937.1 427.2 937.3 420.1C937.5 413.1 937.2 402.5 937.2 399.0L947.4 396.9L921.7 374.2L905.0 405.3L916.0 403.2C916.4 406.5 917.8 416.4 918.1 423.0C918.5 429.6 918.5 436.3 918.1 442.9C917.8 449.5 917.1 456.1 916.2 462.7C915.2 469.2 913.9 475.8 912.3 482.2C910.7 488.7 908.8 495.1 906.6 501.3C904.5 507.6 902.0 513.8 899.3 519.9C896.6 526.0 893.7 531.9 890.5 537.7C887.2 543.5 883.8 549.2 880.1 554.7C876.4 560.2 872.5 565.6 868.4 570.8C864.3 576.0 859.9 581.0 855.4 585.8C850.9 590.6 846.1 595.3 841.2 599.7C836.3 604.2 831.2 608.4 826.0 612.5C820.8 616.5 815.3 620.4 809.8 624.0C804.2 627.6 798.5 631.1 792.7 634.3C786.9 637.5 777.8 641.8 774.8 643.3Z" fill="#4a80c4"/>
<path id="t1" d="M468.6 208.9 A212.7 212.7 0 0 1 650.3 125.5" fill="none"/><text font-size="10" fill="#a23a8c" textLength="181.0" lengthAdjust="spacing"><textPath href="#t1" textLength="181.0" lengthAdjust="spacing">Labor/Payments</textPath></text>
<path id="t2" d="M518.6 210.9 A182.9 182.9 0 0 1 750.4 289.2" fill="none"/><text font-size="10" fill="#6487b3" textLength="233.1" lengthAdjust="spacing"><textPath href="#t2" textLength="233.1" lengthAdjust="spacing">Income/Goods and Services</textPath></text>
<path id="t3" d="M414.8 490.0 A171.5 171.5 0 0 0 570.7 616.6" fill="none"/><text font-size="10" fill="#6487b3" textLength="186.5" lengthAdjust="spacing"><textPath href="#t3" textLength="186.5" lengthAdjust="spacing">Services/Income</textPath></text>
<path id="t4" d="M446.8 450.0 A147.6 147.6 0 0 0 557.6 531.7" fill="none"/><text font-size="10" fill="#a23a8c" textLength="124.5" lengthAdjust="spacing"><textPath href="#t4" textLength="124.5" lengthAdjust="spacing">Taxes/Labor</textPath></text>
<path id="t5" d="M706.3 532.7 A157.9 157.9 0 0 0 877.8 372.2" fill="none"/><text font-size="10" fill="#a23a8c" textLength="230.3" lengthAdjust="spacing"><textPath href="#t5" textLength="230.3" lengthAdjust="spacing">Taxes/Goods and Services</textPath></text>
<path id="t6" d="M774.6 630.4 A204.7 204.7 0 0 0 905.3 425.4" fill="none"/><text font-size="10" fill="#6487b3" textLength="226.3" lengthAdjust="spacing"><textPath href="#t6" textLength="226.3" lengthAdjust="spacing">Services/Payments</textPath></text>
<g id="house">
<ellipse cx="484.5" cy="343.6" rx="115.5" ry="17" fill="#80ad6e"/>
<path d="M380.4 247.0 L390.9 276.4 L388.4 276.4 L397.2 301.2 L393.0 301.2 L401.4 324.5 L359.4 324.5 L367.8 301.2 L363.6 301.2 L372.4 276.4 L369.9 276.4Z" fill="#b7d433"/><path d="M380.4 262.5 L380.4 334.6 M380.4 305.1 l-9.5 -9.3 M380.4 297.4 l9.5 -9.3 M380.4 285.8 l-6.3 -6.2" stroke="#b5651d" stroke-width="1.3" fill="none"/>
<path d="M565.6 247.0 L574.9 276.4 L572.6 276.4 L580.4 301.2 L576.7 301.2 L584.1 324.5 L547.1 324.5 L554.5 301.2 L550.8 301.2 L558.6 276.4 L556.4 276.4Z" fill="#3f9142"/><path d="M565.6 262.5 L565.6 333.5 M565.6 305.1 l-8.3 -9.3 M565.6 297.4 l8.3 -9.3 M565.6 285.8 l-5.5 -6.2" stroke="#2e5d2e" stroke-width="1.3" fill="none"/>
<path d="M589.6 295.3 L596.4 311.5 L594.7 311.5 L600.4 325.2 L597.7 325.2 L603.1 338.0 L576.1 338.0 L581.5 325.2 L578.8 325.2 L584.5 311.5 L582.9 311.5Z" fill="#b7d433"/><path d="M589.6 303.8 L589.6 342.5 M589.6 327.3 l-6.1 -5.1 M589.6 323.1 l6.1 -5.1 M589.6 316.6 l-4.0 -3.4" stroke="#b5651d" stroke-width="1.3" fill="none"/>
<rect x="388.8" y="306" width="1.5" height="29" fill="#f0ece4"/><rect x="388.8" y="326.500" width="10" height="1.200" fill="#f0ece4"/>
<path d="M398.4 280 H539.500 V300 H548 V335.800 H398.400Z" fill="#c9b398"/>
<rect x="398.4" y="280" width="82" height="24" fill="#c4ad92"/>
<path d="M400.6 262.6 L536.8 262.6 L544.6 280.6 L392.8 280.6Z" fill="#b3284b"/>
<path d="M398.4 281 L432 255.5 L458 275 L458 304 L398.4 304Z" fill="#c9b398"/>
<path d="M393.5 280.6 L432 254.3 L462 276" stroke="#7d1e2e" stroke-width="1.6" fill="none"/>
<path d="M450 284 L464.3 272.5 L478 283 L478 304 L450 304Z" fill="#ccb69c"/>
<path d="M449 283.5 L464.3 271.6 L479 283" stroke="#7d1e2e" stroke-width="1.4" fill="none"/>
<path d="M480.5 305 L513 283 L548 306 L548 335.8 L480.5 335.8Z" fill="#ccb69c"/>
<path d="M480 304.5 L513 282 L549 305.6" stroke="#7d1e2e" stroke-width="1.6" fill="none"/>
<path d="M389 301.6 L484 301.6 L480 306.8 L386 306.8Z" fill="#b3284b"/>
<rect x="390" y="329" width="68" height="6.8" fill="#c2ab90"/>
<rect x="416.5" y="307" width="1.6" height="28" fill="#eee8e0"/><rect x="449" y="307" width="1.6" height="28" fill="#eee8e0"/>
<rect x="402.0" y="284.5" width="11.5" height="14.0" fill="#f6f2ec" stroke="#8a5a44" stroke-width="1.1"/><path d="M407.8 284.5 v14.0" stroke="#8a5a44" stroke-width="0.9"/><path d="M402.0 291.5 h11.5" stroke="#8a5a44" stroke-width="0.9"/>
<rect x="421.6" y="284.5" width="23.0" height="14.0" fill="#f6f2ec" stroke="#8a5a44" stroke-width="1.1"/><path d="M427.4 284.5 v14.0" stroke="#8a5a44" stroke-width="0.9"/><path d="M433.1 284.5 v14.0" stroke="#8a5a44" stroke-width="0.9"/><path d="M438.9 284.5 v14.0" stroke="#8a5a44" stroke-width="0.9"/><path d="M421.6 291.5 h23.0" stroke="#8a5a44" stroke-width="0.9"/>
<rect x="402.0" y="310.6" width="11.5" height="14.4" fill="#f6f2ec" stroke="#8a5a44" stroke-width="1.1"/><path d="M407.8 310.6 v14.4" stroke="#8a5a44" stroke-width="0.9"/><path d="M402.0 317.8 h11.5" stroke="#8a5a44" stroke-width="0.9"/>
<rect x="421.6" y="310.6" width="23.0" height="14.4" fill="#f6f2ec" stroke="#8a5a44" stroke-width="1.1"/><path d="M427.4 310.6 v14.4" stroke="#8a5a44" stroke-width="0.9"/><path d="M433.1 310.6 v14.4" stroke="#8a5a44" stroke-width="0.9"/><path d="M438.9 310.6 v14.4" stroke="#8a5a44" stroke-width="0.9"/><path d="M421.6 317.8 h23.0" stroke="#8a5a44" stroke-width="0.9"/>
<rect x="484.3" y="310.6" width="23.2" height="14.4" fill="#f6f2ec" stroke="#8a5a44" stroke-width="1.1"/><path d="M490.1 310.6 v14.4" stroke="#8a5a44" stroke-width="0.9"/><path d="M495.9 310.6 v14.4" stroke="#8a5a44" stroke-width="0.9"/><path d="M501.7 310.6 v14.4" stroke="#8a5a44" stroke-width="0.9"/><path d="M484.3 317.8 h23.2" stroke="#8a5a44" stroke-width="0.9"/>
<rect x="518.8" y="310.6" width="23.0" height="14.4" fill="#f6f2ec" stroke="#8a5a44" stroke-width="1.1"/><path d="M524.5 310.6 v14.4" stroke="#8a5a44" stroke-width="0.9"/><path d="M530.3 310.6 v14.4" stroke="#8a5a44" stroke-width="0.9"/><path d="M536.0 310.6 v14.4" stroke="#8a5a44" stroke-width="0.9"/><path d="M518.8 317.8 h23.0" stroke="#8a5a44" stroke-width="0.9"/>
<path d="M459 298.6 V284 Q459 278.4 463.9 278.4 Q468.8 278.4 468.8 284 V298.6Z" fill="#f6f2ec" stroke="#8a5a44" stroke-width="1.1"/><path d="M463.9 278.4 V298.6 M459 288 H468.8" stroke="#8a5a44" stroke-width="0.8"/>
<rect x="484" y="285" width="10" height="5.8" fill="#f6f2ec" stroke="#8a5a44" stroke-width="1"/>
<circle cx="432" cy="265.5" r="1.8" fill="#f0e8dc" stroke="#8a5a44" stroke-width="0.7"/><circle cx="513" cy="290.5" r="1.8" fill="#f0e8dc" stroke="#8a5a44" stroke-width="0.7"/>
<rect x="458.7" y="313.3" width="10.6" height="21.3" fill="#8a5a3a"/>
</g>
<g id="biz">
<ellipse cx="828.4" cy="345.8" rx="115.4" ry="14.6" fill="#80aa6c"/>
<rect x="737" y="330.5" width="188" height="2.5" fill="#5a6a60"/>
<rect x="791.3" y="196.7" width="72.7" height="135" fill="#b3bacb"/><rect x="845.8" y="196.7" width="18.2" height="12.5" fill="#888d96"/>
<rect x="750.8" y="220" width="61.2" height="112" fill="#a9b1c2"/><rect x="796" y="220" width="16" height="10" fill="#888d96"/>
<rect x="866" y="220" width="37.8" height="112" fill="#a9b1c2"/><rect x="889" y="220" width="14.8" height="10" fill="#888d96"/>
<rect x="739.0" y="238.9" width="10.0" height="92.5" fill="#b5eef6"/><rect x="749.0" y="238.9" width="1.8" height="92.5" fill="#8aabb2"/><rect x="739.0" y="250.4" width="11.8" height="1.2" fill="#1fa9bb"/><rect x="739.0" y="259.4" width="11.8" height="1.2" fill="#1fa9bb"/><rect x="739.0" y="268.4" width="11.8" height="1.2" fill="#1fa9bb"/><rect x="739.0" y="277.4" width="11.8" height="1.2" fill="#1fa9bb"/><rect x="739.0" y="286.4" width="11.8" height="1.2" fill="#1fa9bb"/><rect x="739.0" y="295.4" width="11.8" height="1.2" fill="#1fa9bb"/><rect x="739.0" y="304.4" width="11.8" height="1.2" fill="#1fa9bb"/><rect x="739.0" y="313.4" width="11.8" height="1.2" fill="#1fa9bb"/><rect x="739.0" y="322.4" width="11.8" height="1.2" fill="#1fa9bb"/><rect x="739.0" y="238.9" width="1.3" height="92.5" fill="#22b3c6"/><rect x="738.0" y="238.9" width="14.3" height="2.5" fill="#6f7a84"/>
<rect x="769.6" y="230.0" width="31.4" height="101.5" fill="#b5eef6"/><rect x="801.0" y="230.0" width="15.0" height="101.5" fill="#8aabb2"/><rect x="769.6" y="243.0" width="46.4" height="1.2" fill="#1fa9bb"/><rect x="769.6" y="252.0" width="46.4" height="1.2" fill="#1fa9bb"/><rect x="769.6" y="261.0" width="46.4" height="1.2" fill="#1fa9bb"/><rect x="769.6" y="270.0" width="46.4" height="1.2" fill="#1fa9bb"/><rect x="769.6" y="279.0" width="46.4" height="1.2" fill="#1fa9bb"/><rect x="769.6" y="288.0" width="46.4" height="1.2" fill="#1fa9bb"/><rect x="769.6" y="297.0" width="46.4" height="1.2" fill="#1fa9bb"/><rect x="769.6" y="306.0" width="46.4" height="1.2" fill="#1fa9bb"/><rect x="769.6" y="315.0" width="46.4" height="1.2" fill="#1fa9bb"/><rect x="769.6" y="324.0" width="46.4" height="1.2" fill="#1fa9bb"/><rect x="769.6" y="230.0" width="1.3" height="101.5" fill="#22b3c6"/><rect x="768.6" y="230.0" width="48.9" height="4.0" fill="#6f7a84"/>
<rect x="867.4" y="230.0" width="26.4" height="101.5" fill="#b5eef6"/><rect x="893.8" y="230.0" width="14.2" height="101.5" fill="#8aabb2"/><rect x="867.4" y="243.0" width="40.6" height="1.2" fill="#1fa9bb"/><rect x="867.4" y="252.0" width="40.6" height="1.2" fill="#1fa9bb"/><rect x="867.4" y="261.0" width="40.6" height="1.2" fill="#1fa9bb"/><rect x="867.4" y="270.0" width="40.6" height="1.2" fill="#1fa9bb"/><rect x="867.4" y="279.0" width="40.6" height="1.2" fill="#1fa9bb"/><rect x="867.4" y="288.0" width="40.6" height="1.2" fill="#1fa9bb"/><rect x="867.4" y="297.0" width="40.6" height="1.2" fill="#1fa9bb"/><rect x="867.4" y="306.0" width="40.6" height="1.2" fill="#1fa9bb"/><rect x="867.4" y="315.0" width="40.6" height="1.2" fill="#1fa9bb"/><rect x="867.4" y="324.0" width="40.6" height="1.2" fill="#1fa9bb"/><rect x="867.4" y="230.0" width="1.3" height="101.5" fill="#22b3c6"/><rect x="866.4" y="230.0" width="43.1" height="4.0" fill="#6f7a84"/>
<rect x="814.7" y="209.0" width="37.8" height="122.5" fill="#b5eef6"/><rect x="852.5" y="209.0" width="14.9" height="122.5" fill="#8aabb2"/><rect x="814.7" y="224.0" width="52.7" height="1.2" fill="#1fa9bb"/><rect x="814.7" y="234.5" width="52.7" height="1.2" fill="#1fa9bb"/><rect x="814.7" y="245.0" width="52.7" height="1.2" fill="#1fa9bb"/><rect x="814.7" y="255.5" width="52.7" height="1.2" fill="#1fa9bb"/><rect x="814.7" y="266.0" width="52.7" height="1.2" fill="#1fa9bb"/><rect x="814.7" y="276.5" width="52.7" height="1.2" fill="#1fa9bb"/><rect x="814.7" y="287.0" width="52.7" height="1.2" fill="#1fa9bb"/><rect x="814.7" y="297.5" width="52.7" height="1.2" fill="#1fa9bb"/><rect x="814.7" y="308.0" width="52.7" height="1.2" fill="#1fa9bb"/><rect x="814.7" y="318.5" width="52.7" height="1.2" fill="#1fa9bb"/><rect x="814.7" y="329.0" width="52.7" height="1.2" fill="#1fa9bb"/><rect x="814.7" y="209.0" width="1.3" height="122.5" fill="#22b3c6"/><rect x="813.7" y="209.0" width="55.2" height="4.5" fill="#6f7a84"/>
<rect x="753" y="316" width="14" height="2" fill="#dfe6ee"/>
<path d="M731.9 325.1 v7.7" stroke="#8a4a1a" stroke-width="1"/><ellipse cx="731.9" cy="323.3" rx="3.9" ry="5.9" fill="#7ed348"/>
<path d="M818.8 325.4 v7.2" stroke="#8a4a1a" stroke-width="1"/><ellipse cx="818.8" cy="323.7" rx="3.7" ry="5.5" fill="#4a9a3a"/>
<path d="M829.0 323.6 v9.8" stroke="#8a4a1a" stroke-width="1"/><ellipse cx="829.0" cy="321.3" rx="4.9" ry="7.5" fill="#7ed348"/>
<path d="M872.8 325.1 v7.7" stroke="#8a4a1a" stroke-width="1"/><ellipse cx="872.8" cy="323.3" rx="3.9" ry="5.9" fill="#4a9a3a"/>
<path d="M885.0 322.7 v11.1" stroke="#8a4a1a" stroke-width="1"/><ellipse cx="885.0" cy="320.1" rx="5.6" ry="8.5" fill="#7ed348"/>
<path d="M911.4 325.7 v6.8" stroke="#8a4a1a" stroke-width="1"/><ellipse cx="911.4" cy="324.1" rx="3.4" ry="5.2" fill="#4a9a3a"/>
<path d="M921.4 324.2 v8.9" stroke="#8a4a1a" stroke-width="1"/><ellipse cx="921.4" cy="322.1" rx="4.5" ry="6.8" fill="#7ed348"/>
</g>
<g id="gov">
<ellipse cx="658" cy="688" rx="115" ry="15.3" fill="#c6ccd9"/>
<rect x="564.0" y="608.0" width="19.0" height="70.3" fill="#2d7cc6"/><rect x="563.2" y="608.0" width="20.6" height="2" fill="#1f5f9e"/><rect x="566.2" y="613.0" width="3.4" height="4.6" fill="#1c4f86"/><rect x="572.0" y="613.0" width="3.4" height="4.6" fill="#1c4f86"/><rect x="577.8" y="613.0" width="3.4" height="4.6" fill="#1c4f86"/><rect x="564.0" y="619.2" width="19.0" height="1" fill="#4a9ae0"/><rect x="566.2" y="621.7" width="3.4" height="4.6" fill="#1c4f86"/><rect x="572.0" y="621.7" width="3.4" height="4.6" fill="#1c4f86"/><rect x="577.8" y="621.7" width="3.4" height="4.6" fill="#1c4f86"/><rect x="564.0" y="627.9" width="19.0" height="1" fill="#4a9ae0"/><rect x="566.2" y="630.4" width="3.4" height="4.6" fill="#1c4f86"/><rect x="572.0" y="630.4" width="3.4" height="4.6" fill="#1c4f86"/><rect x="577.8" y="630.4" width="3.4" height="4.6" fill="#1c4f86"/><rect x="564.0" y="636.6" width="19.0" height="1" fill="#4a9ae0"/><rect x="566.2" y="639.1" width="3.4" height="4.6" fill="#1c4f86"/><rect x="572.0" y="639.1" width="3.4" height="4.6" fill="#1c4f86"/><rect x="577.8" y="639.1" width="3.4" height="4.6" fill="#1c4f86"/><rect x="564.0" y="645.3" width="19.0" height="1" fill="#4a9ae0"/><rect x="566.2" y="647.8" width="3.4" height="4.6" fill="#1c4f86"/><rect x="572.0" y="647.8" width="3.4" height="4.6" fill="#1c4f86"/><rect x="577.8" y="647.8" width="3.4" height="4.6" fill="#1c4f86"/><rect x="564.0" y="654.0" width="19.0" height="1" fill="#4a9ae0"/><rect x="566.2" y="656.5" width="3.4" height="4.6" fill="#1c4f86"/><rect x="572.0" y="656.5" width="3.4" height="4.6" fill="#1c4f86"/><rect x="577.8" y="656.5" width="3.4" height="4.6" fill="#1c4f86"/><rect x="564.0" y="662.7" width="19.0" height="1" fill="#4a9ae0"/><rect x="566.2" y="665.2" width="3.4" height="4.6" fill="#1c4f86"/><rect x="572.0" y="665.2" width="3.4" height="4.6" fill="#1c4f86"/><rect x="577.8" y="665.2" width="3.4" height="4.6" fill="#1c4f86"/><rect x="564.0" y="671.4" width="19.0" height="1" fill="#4a9ae0"/>
<rect x="732.0" y="608.0" width="19.0" height="70.3" fill="#2d7cc6"/><rect x="731.2" y="608.0" width="20.6" height="2" fill="#1f5f9e"/><rect x="734.2" y="613.0" width="3.4" height="4.6" fill="#1c4f86"/><rect x="740.0" y="613.0" width="3.4" height="4.6" fill="#1c4f86"/><rect x="745.8" y="613.0" width="3.4" height="4.6" fill="#1c4f86"/><rect x="732.0" y="619.2" width="19.0" height="1" fill="#4a9ae0"/><rect x="734.2" y="621.7" width="3.4" height="4.6" fill="#1c4f86"/><rect x="740.0" y="621.7" width="3.4" height="4.6" fill="#1c4f86"/><rect x="745.8" y="621.7" width="3.4" height="4.6" fill="#1c4f86"/><rect x="732.0" y="627.9" width="19.0" height="1" fill="#4a9ae0"/><rect x="734.2" y="630.4" width="3.4" height="4.6" fill="#1c4f86"/><rect x="740.0" y="630.4" width="3.4" height="4.6" fill="#1c4f86"/><rect x="745.8" y="630.4" width="3.4" height="4.6" fill="#1c4f86"/><rect x="732.0" y="636.6" width="19.0" height="1" fill="#4a9ae0"/><rect x="734.2" y="639.1" width="3.4" height="4.6" fill="#1c4f86"/><rect x="740.0" y="639.1" width="3.4" height="4.6" fill="#1c4f86"/><rect x="745.8" y="639.1" width="3.4" height="4.6" fill="#1c4f86"/><rect x="732.0" y="645.3" width="19.0" height="1" fill="#4a9ae0"/><rect x="734.2" y="647.8" width="3.4" height="4.6" fill="#1c4f86"/><rect x="740.0" y="647.8" width="3.4" height="4.6" fill="#1c4f86"/><rect x="745.8" y="647.8" width="3.4" height="4.6" fill="#1c4f86"/><rect x="732.0" y="654.0" width="19.0" height="1" fill="#4a9ae0"/><rect x="734.2" y="656.5" width="3.4" height="4.6" fill="#1c4f86"/><rect x="740.0" y="656.5" width="3.4" height="4.6" fill="#1c4f86"/><rect x="745.8" y="656.5" width="3.4" height="4.6" fill="#1c4f86"/><rect x="732.0" y="662.7" width="19.0" height="1" fill="#4a9ae0"/><rect x="734.2" y="665.2" width="3.4" height="4.6" fill="#1c4f86"/><rect x="740.0" y="665.2" width="3.4" height="4.6" fill="#1c4f86"/><rect x="745.8" y="665.2" width="3.4" height="4.6" fill="#1c4f86"/><rect x="732.0" y="671.4" width="19.0" height="1" fill="#4a9ae0"/>
<rect x="591.5" y="588.7" width="30" height="7" fill="#1ba3bf"/><rect x="694.5" y="588.7" width="30" height="7" fill="#1ba3bf"/>
<rect x="582.8" y="595.0" width="38.5" height="83.3" fill="#3fd0e2"/><rect x="582.8" y="599.0" width="38.5" height="2.6" fill="#b9f2f7"/><rect x="582.8" y="606.0" width="38.5" height="2.6" fill="#b9f2f7"/><rect x="582.8" y="613.0" width="38.5" height="2.6" fill="#b9f2f7"/><rect x="582.8" y="620.0" width="38.5" height="2.6" fill="#b9f2f7"/><rect x="582.8" y="627.0" width="38.5" height="2.6" fill="#b9f2f7"/><rect x="582.8" y="634.0" width="38.5" height="2.6" fill="#b9f2f7"/><rect x="582.8" y="641.0" width="38.5" height="2.6" fill="#b9f2f7"/><rect x="582.8" y="648.0" width="38.5" height="2.6" fill="#b9f2f7"/><rect x="582.8" y="655.0" width="38.5" height="2.6" fill="#b9f2f7"/><rect x="582.8" y="662.0" width="38.5" height="2.6" fill="#b9f2f7"/><rect x="582.8" y="669.0" width="38.5" height="2.6" fill="#b9f2f7"/>
<rect x="695.0" y="595.0" width="37.0" height="83.3" fill="#3fd0e2"/><rect x="695.0" y="599.0" width="37.0" height="2.6" fill="#b9f2f7"/><rect x="695.0" y="606.0" width="37.0" height="2.6" fill="#b9f2f7"/><rect x="695.0" y="613.0" width="37.0" height="2.6" fill="#b9f2f7"/><rect x="695.0" y="620.0" width="37.0" height="2.6" fill="#b9f2f7"/><rect x="695.0" y="627.0" width="37.0" height="2.6" fill="#b9f2f7"/><rect x="695.0" y="634.0" width="37.0" height="2.6" fill="#b9f2f7"/><rect x="695.0" y="641.0" width="37.0" height="2.6" fill="#b9f2f7"/><rect x="695.0" y="648.0" width="37.0" height="2.6" fill="#b9f2f7"/><rect x="695.0" y="655.0" width="37.0" height="2.6" fill="#b9f2f7"/><rect x="695.0" y="662.0" width="37.0" height="2.6" fill="#b9f2f7"/><rect x="695.0" y="669.0" width="37.0" height="2.6" fill="#b9f2f7"/>
<rect x="582.8" y="595" width="4" height="83" fill="#a8eef5"/><rect x="728" y="595" width="4" height="83" fill="#a8eef5"/>
<rect x="585.5" y="662" width="11" height="16.3" fill="#7fe3ee"/><rect x="719" y="662" width="11" height="16.3" fill="#7fe3ee"/>
<rect x="621" y="582.8" width="74" height="24" fill="#7969c9"/>
<rect x="629.0" y="586.5" width="4" height="15" rx="2" fill="#3b3960"/>
<rect x="638.5" y="586.5" width="4" height="15" rx="2" fill="#3b3960"/>
<rect x="676.0" y="586.5" width="4" height="15" rx="2" fill="#3b3960"/>
<rect x="685.5" y="586.5" width="4" height="15" rx="2" fill="#3b3960"/>
<rect x="627" y="566" width="61" height="17.5" fill="#8474d4"/>
<rect x="623" y="562" width="68.4" height="4.6" fill="#7465c4"/>
<rect x="632.5" y="569.5" width="4" height="12" rx="2" fill="#3b3960"/>
<rect x="641.8" y="569.5" width="4" height="12" rx="2" fill="#3b3960"/>
<rect x="651.1" y="569.5" width="4" height="12" rx="2" fill="#3b3960"/>
<rect x="660.4" y="569.5" width="4" height="12" rx="2" fill="#3b3960"/>
<rect x="669.7" y="569.5" width="4" height="12" rx="2" fill="#3b3960"/>
<rect x="679.0" y="569.5" width="4" height="12" rx="2" fill="#3b3960"/>
<path d="M632.4 562 A25.5 26 0 0 1 683.4 562Z" fill="#17a9c3"/>
<path d="M657.5 536 V522" stroke="#6a5ac0" stroke-width="1.2"/><path d="M658.2 521.4 H668.8 L666.3 525.5 L668.8 529.7 H658.2Z" fill="#e62fd4"/>
<rect x="603" y="624" width="110" height="51" fill="#4a4a4c"/>
<rect x="603.0" y="624" width="12.4" height="50" fill="#8a7bdc"/><rect x="606.4" y="624" width="1.5" height="50" fill="#6b5cc0"/><rect x="610.6" y="624" width="1.5" height="50" fill="#6b5cc0"/>
<rect x="601.5" y="672.5" width="15.4" height="6" fill="#1ba3bf"/>
<rect x="627.4" y="624" width="12.4" height="50" fill="#8a7bdc"/><rect x="630.8" y="624" width="1.5" height="50" fill="#6b5cc0"/><rect x="635.0" y="624" width="1.5" height="50" fill="#6b5cc0"/>
<rect x="625.9" y="672.5" width="15.4" height="6" fill="#1ba3bf"/>
<rect x="651.8" y="624" width="12.4" height="50" fill="#8a7bdc"/><rect x="655.2" y="624" width="1.5" height="50" fill="#6b5cc0"/><rect x="659.4" y="624" width="1.5" height="50" fill="#6b5cc0"/>
<rect x="650.3" y="672.5" width="15.4" height="6" fill="#1ba3bf"/>
<rect x="676.2" y="624" width="12.4" height="50" fill="#8a7bdc"/><rect x="679.6" y="624" width="1.5" height="50" fill="#6b5cc0"/><rect x="683.8" y="624" width="1.5" height="50" fill="#6b5cc0"/>
<rect x="674.7" y="672.5" width="15.4" height="6" fill="#1ba3bf"/>
<rect x="700.6" y="624" width="12.4" height="50" fill="#8a7bdc"/><rect x="704.0" y="624" width="1.5" height="50" fill="#6b5cc0"/><rect x="708.2" y="624" width="1.5" height="50" fill="#6b5cc0"/>
<rect x="699.1" y="672.5" width="15.4" height="6" fill="#1ba3bf"/>
<path d="M657.4 587.5 L714 621 L601 621Z" fill="#1b9db8"/>
<path d="M657.4 593 L706 620 L609 620Z" fill="#35c6da"/>
<path d="M657.4 601.2 L681.5 616 L633.5 616Z" fill="#ffffff"/>
<rect x="602" y="618" width="111.5" height="6.8" fill="#1790ab"/>
<rect x="598.5" y="518.6" width="119.5" height="164.4" fill="none" stroke="#8cc06c" stroke-width="1" stroke-dasharray="3 3"/>
<circle cx="594.4" cy="514.0" r="3.9" fill="#3cc63c"/>
<circle cx="657.0" cy="514.0" r="3.9" fill="#3cc63c"/>
<circle cx="720.5" cy="514.0" r="3.9" fill="#3cc63c"/>
<circle cx="594.4" cy="599.0" r="3.9" fill="#3cc63c"/>
<circle cx="720.5" cy="599.0" r="3.9" fill="#3cc63c"/>
<circle cx="594.4" cy="682.6" r="3.9" fill="#3cc63c"/>
<circle cx="657.0" cy="682.6" r="3.9" fill="#3cc63c"/>
<circle cx="720.5" cy="682.6" r="3.9" fill="#3cc63c"/>
<path d="M659.6 481.6 A2.6 2.6 0 1 0 659.6 485.4" stroke="#4fb84f" stroke-width="1.2" fill="none"/>
</g>
<text x="440" y="381.5" font-size="14.5" fill="#1a1a1a" textLength="70.500" lengthAdjust="spacingAndGlyphs">Households</text>
<text x="790.200" y="381.5" font-size="14.5" fill="#1a1a1a" textLength="51.700" lengthAdjust="spacingAndGlyphs">Business</text>
<text x="616.300" y="725.5" font-size="14.5" fill="#1a1a1a" textLength="75.300" lengthAdjust="spacingAndGlyphs">Government</text>
</g></svg>
</div>
<!-- RIGHT -->
<div id="right">
<div class="tab" style="left:0.5px;width:74.5px;background:#d2d2d2;color:#1c1c1c">Info</div>
<div class="tab" style="left:75px;width:74px;background:#6a6a6a;border-right:1px solid #7c7c7c">Custom Props</div>
<div class="tab" style="left:149px;width:74px;background:#6a6a6a">Advanced</div>
<svg class="abs" style="left:0;top:0" width="223" height="300" viewBox="977 66 223 300">
<path d="M986.300 101.500 h5.400 l-2.700 4.600z M986.300 255.300 h5.400 l-2.700 4.600z" fill="#767676"/>
<path d="M1035 106.500 H1191 M1050 260 H1191" stroke="#595959" stroke-width="1"/>
<rect x="1062.500" y="129.500" width="128" height="54" fill="#454545" stroke="#6c6c6c" stroke-width="1" stroke-dasharray="1.500 1.500"/>
<rect x="1062.500" y="189.500" width="128" height="53.500" fill="#454545" stroke="#6c6c6c" stroke-width="1" stroke-dasharray="1.500 1.500"/>
<rect x="1063.500" y="304.700" width="126.200" height="11" rx="2" fill="#6d6d6d"/><rect x="1179.500" y="304.700" width="10.200" height="11" rx="2" fill="#2a6be0"/><path d="M1182.400 309 l2.200 -2.200 l2.200 2.200 M1182.400 311.500 l2.200 2.200 l2.200 -2.200" stroke="#fff" stroke-width="1" fill="none"/>
</svg>
<div class="rl" style="left:18px;top:32.5px;font-size:8.5px">Meta Data</div>
<div class="rl" style="left:18px;top:45.500px">Name</div>
<div class="fld" style="left:85.500px;top:44.500px;width:128.500px;height:13.500px;line-height:13.500px">Government</div>
<div class="rl" style="left:18px;top:63.500px">Description</div>
<div class="rl" style="left:90px;top:64px;font-size:8.800px;letter-spacing:-0.15px;color:#f6f6f6">Government[Services.cdl]</div>
<div class="rl" style="left:18px;top:123px">Keywords</div>
<div class="rl" style="left:90px;top:124px;font-size:8.800px;letter-spacing:-0.15px;color:#f6f6f6">government</div>
<div class="rl" style="left:18px;top:186.500px;font-size:8.5px">Developer Info</div>
<div class="rl" style="left:18px;top:201.500px">ID</div>
<div class="fld" style="left:85.500px;top:199.500px;width:50.500px;height:12.500px;line-height:12.500px">572214</div>
<div class="rl" style="left:18px;top:220.500px">Sub ID</div>
<div class="fld" style="left:85.500px;top:219px;width:50.500px;height:12.500px;line-height:12.500px">140990</div>
<div class="rl" style="left:18px;top:239px">Layer</div>
<div class="rl" style="left:91px;top:239.700px;font-size:8.5px;color:#f6f6f6">Layer 1</div>

</div>
<div id="status">
<span style="left:8px">Ready</span>
<span style="left:157px">W: 2.11,&nbsp; H: 2.87,&nbsp; Angle: 0.00°</span>
<span style="left:391px">M: [ 5.54, 6.60 ]</span>
<span style="left:574px">ID: 572214</span>
</div>
</body></html>
